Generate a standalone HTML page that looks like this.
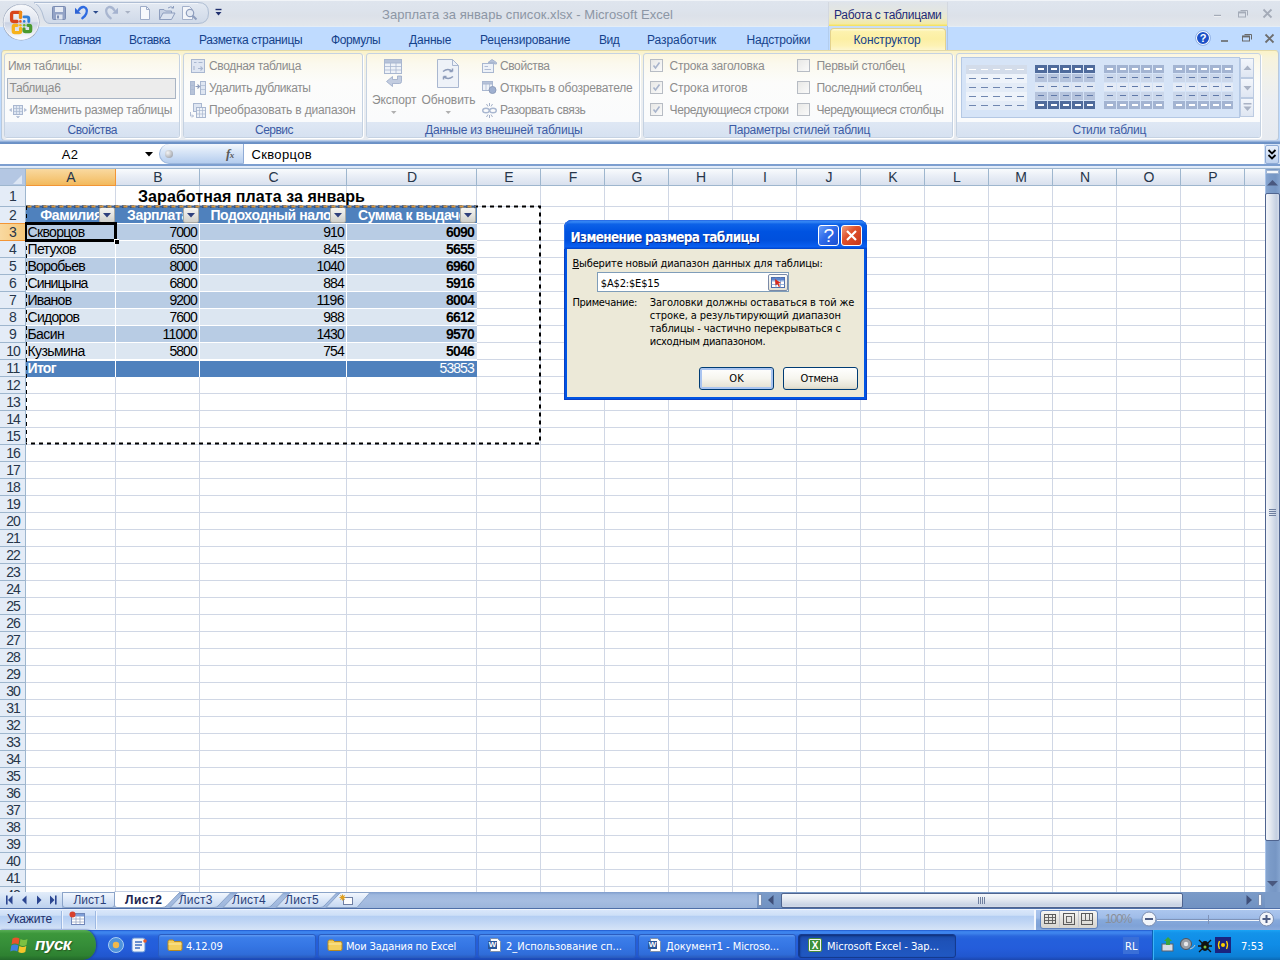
<!DOCTYPE html>
<html lang="ru"><head><meta charset="utf-8"><title>Microsoft Excel</title>
<style>
html,body{margin:0;padding:0}
body{width:1280px;height:960px;position:relative;overflow:hidden;background:#fff;font-family:"Liberation Sans",sans-serif}
.b{position:absolute;box-sizing:border-box}
.t{position:absolute;white-space:nowrap}
svg{position:absolute;overflow:visible}
u{text-decoration:underline}
</style></head><body>
<div class="b" style="left:0px;top:0px;width:1280px;height:26px;background:linear-gradient(#dfe5ee 0,#dde3ec 40%,#dce1e9 60%,#e3e7ec 100%);"></div>
<div class="b" style="left:0px;top:0px;width:1280px;height:1px;background:#f1f4f8;"></div>
<div class="b" style="left:828px;top:2px;width:120px;height:24px;background:linear-gradient(#dfe4ea 0,#e3e6e2 35%,#ebe9cd 65%,#f3eaa6 90%,#f6e052 100%);border-left:1px solid #d3d8e0;border-right:1px solid #d3d8e0;"></div>
<span class="t" style="left:834.00px;top:7.34px;font:12px/16px 'Liberation Sans',sans-serif;color:#1e2a78;letter-spacing:-0.297px;">Работа с таблицами</span>
<span class="t" style="left:382.00px;top:6.00px;font:13px/17px 'Liberation Sans',sans-serif;color:#8c96a5;letter-spacing:0.037px;">Зарплата за январь список.xlsx - Microsoft Excel</span>
<svg style="left:0;top:0" width="240" height="30"><defs><linearGradient id="qg" x1="0" y1="0" x2="0" y2="1"><stop offset="0" stop-color="#e4eaf3"/><stop offset="0.5" stop-color="#d9e1ed"/><stop offset="1" stop-color="#cfd9e8"/></linearGradient></defs><path d="M34 2.500H198Q208.500 2.500 208.500 13Q208.500 23.500 198 23.500H50Q45 23.500 43.500 17Q41 6 34 2.500Z" fill="url(#qg)" stroke="#aebdd3"/><path d="M35 3.500H198" stroke="#f2f5fa"/><rect x="52.500" y="6.500" width="13" height="13" rx="1" fill="#93a3c6" stroke="#7b8cb2"/><rect x="55" y="7" width="8" height="5" fill="#e6ebf4"/><rect x="56" y="14.500" width="6.500" height="5" fill="#dfe5f0"/><rect x="57" y="15.500" width="2" height="3" fill="#7b8cb2"/><path d="M75 7.800V13.800H81Z" fill="#2f63d4"/><path d="M78.500 10.500Q81 6.200 84.500 7.200Q88 9 86.300 13.500Q85.200 16.300 82.300 18.200" fill="none" stroke="#2f6be0" stroke-width="2.300" stroke-linecap="round"/><path d="M93 11H98.500L95.750 13.800Z" fill="#2b4a8c"/><path d="M118 7.800V13.800H112Z" fill="#a4b2cf"/><path d="M114.500 10.500Q112 6.200 108.500 7.200Q105 9 106.700 13.500Q107.800 16.300 110.700 18.200" fill="none" stroke="#a9b6d0" stroke-width="2.300" stroke-linecap="round"/><path d="M125 11H130.500L127.750 13.800Z" fill="#a9b2c4"/><path d="M140.500 6.500H146.500L149.500 9.500V19.500H140.500Z" fill="#f7f9fc" stroke="#9fadc8"/><path d="M146.500 6.500V9.500H149.500" fill="none" stroke="#9fadc8"/><path d="M159.500 19.500V9.500H164L165.500 11H171.500V13" fill="#c8d2e4" stroke="#8e9ebe"/><path d="M159.500 19.500L163 13H175L171.500 19.500Z" fill="#dde4f0" stroke="#8e9ebe"/><path d="M168 8Q171 5.500 173.500 8M173.500 8V6M173.500 8H171.500" fill="none" stroke="#8e9ebe"/><path d="M182.500 6.500H189.500L192.500 9.500V19.500H182.500Z" fill="#f4f6fa" stroke="#a3b0ca"/><circle cx="190" cy="13" r="3.700" fill="#e4eaf4" stroke="#8e9ebe" stroke-width="1.200"/><path d="M192.700 15.800L196.500 19.500" stroke="#8e9ebe" stroke-width="2"/><path d="M215.500 9.500H221.500" stroke="#1f2f6e" stroke-width="1.400"/><path d="M215.500 12H221.500L218.500 15.500Z" fill="#1f2f6e"/></svg>
<svg style="left:1210px;top:6px" width="66" height="14"><path d="M4 10.5H11" stroke="#fff" stroke-width="1"/><path d="M4 9.5H11" stroke="#a4abb8" stroke-width="1.4"/><path d="M30.5 4.5H37.5V9.5" fill="none" stroke="#a4abb8"/><rect x="28.5" y="6" width="7" height="5" fill="none" stroke="#a4abb8"/><path d="M28.5 6.6H35.5" stroke="#a4abb8" stroke-width="1.6"/><path d="M53.5 3.5L61.5 11.5M61.5 3.5L53.5 11.5" stroke="#a4abb8" stroke-width="1.8"/></svg>
<div class="b" style="left:0px;top:26px;width:1280px;height:24px;background:#bfdbff;"></div>
<div class="b" style="left:0px;top:26px;width:1280px;height:1px;background:#e4edf6;"></div>
<span class="t" style="left:59.00px;top:31.84px;font:12px/16px 'Liberation Sans',sans-serif;color:#15428b;letter-spacing:-0.555px;">Главная</span>
<span class="t" style="left:129.00px;top:31.84px;font:12px/16px 'Liberation Sans',sans-serif;color:#15428b;letter-spacing:-0.544px;">Вставка</span>
<span class="t" style="left:199.00px;top:31.84px;font:12px/16px 'Liberation Sans',sans-serif;color:#15428b;letter-spacing:-0.328px;">Разметка страницы</span>
<span class="t" style="left:331.00px;top:31.84px;font:12px/16px 'Liberation Sans',sans-serif;color:#15428b;letter-spacing:-0.417px;">Формулы</span>
<span class="t" style="left:409.00px;top:31.84px;font:12px/16px 'Liberation Sans',sans-serif;color:#15428b;letter-spacing:-0.177px;">Данные</span>
<span class="t" style="left:480.00px;top:31.84px;font:12px/16px 'Liberation Sans',sans-serif;color:#15428b;letter-spacing:-0.169px;">Рецензирование</span>
<span class="t" style="left:599.00px;top:31.84px;font:12px/16px 'Liberation Sans',sans-serif;color:#15428b;letter-spacing:-0.473px;">Вид</span>
<span class="t" style="left:647.00px;top:31.84px;font:12px/16px 'Liberation Sans',sans-serif;color:#15428b;letter-spacing:-0.062px;">Разработчик</span>
<span class="t" style="left:746.50px;top:31.84px;font:12px/16px 'Liberation Sans',sans-serif;color:#15428b;letter-spacing:-0.204px;">Надстройки</span>
<div class="b" style="left:828px;top:26px;width:120px;height:24px;background:linear-gradient(#c9ddf5,#bfdbff 40%);border-left:1px solid #b3cdee;border-right:1px solid #aec6e6;"></div>
<div class="b" style="left:830px;top:28px;width:116px;height:23px;background:linear-gradient(#fefad8 0,#fdf2ae 12%,#fcefa3 45%,#fdf2b4 75%,#fdf7d4 100%);border:1px solid #e3d28e;border-bottom:0;border-radius:4px 4px 0 0;"></div>
<span class="t" style="left:853.50px;top:31.84px;font:12px/16px 'Liberation Sans',sans-serif;color:#15428b;letter-spacing:-0.129px;">Конструктор</span>
<svg style="left:1195px;top:30px" width="84" height="16"><circle cx="8" cy="8" r="6.6" fill="#1b50c8" stroke="#fff" stroke-width="1.2"/><circle cx="8" cy="8" r="7.4" fill="none" stroke="#7fa3de" stroke-width="0.8"/><path d="M26 11H33" stroke="#666" stroke-width="1.6"/><path d="M49.5 4.5H56.5V9.5" fill="none" stroke="#6a6a6a"/><rect x="47.5" y="6" width="7" height="5" fill="none" stroke="#6a6a6a"/><path d="M47.5 6.6H54.5" stroke="#6a6a6a" stroke-width="1.6"/><path d="M70.5 4.5L78.5 12.5M78.5 4.5L70.5 12.5" stroke="#6e6e6e" stroke-width="1.8"/></svg>
<span class="t" style="left:1199.63px;top:31.19px;font:bold 11px/14px 'Liberation Sans',sans-serif;color:#fff;">?</span>
<svg style="left:0;top:0" width="44" height="44"><defs><radialGradient id="og" cx="0.5" cy="0.25" r="0.9"><stop offset="0" stop-color="#ffffff"/><stop offset="0.45" stop-color="#e9edf4"/><stop offset="0.5" stop-color="#cfd7e6"/><stop offset="0.8" stop-color="#e3e8f1"/><stop offset="1" stop-color="#ffffff"/></radialGradient><linearGradient id="og2" x1="0" y1="0" x2="0" y2="1"><stop offset="0" stop-color="#f8f9fc"/><stop offset="0.48" stop-color="#dfe4ee"/><stop offset="0.52" stop-color="#c9d2e3"/><stop offset="1" stop-color="#fdfdff"/></linearGradient></defs><circle cx="21.200" cy="22.200" r="18.300" fill="#9aa6bc"/><circle cx="21.200" cy="22.200" r="17.300" fill="url(#og2)" stroke="#fff" stroke-width="0.800"/><path d="M20.500 12.300H13.500Q11.600 12.300 11.600 14.200V19.600Q11.600 21.500 13.500 21.500H17" fill="none" stroke="#d8441c" stroke-width="3.300" stroke-linecap="round"/><path d="M20.500 12.300V17.500" stroke="#ee8a14" stroke-width="3.300" stroke-linecap="round"/><path d="M24 16.900H27Q28.800 16.900 28.800 18.700V21.500" fill="none" stroke="#2f7ed8" stroke-width="2.900" stroke-linecap="round"/><path d="M17 25.300H14.800Q13.300 25.300 13.300 26.800V31Q13.300 32.600 14.800 32.600H19Q20.600 32.600 20.600 31V28.500" fill="none" stroke="#f7b21a" stroke-width="3.300" stroke-linecap="round"/><path d="M28 25.300H29.200Q30.700 25.300 30.700 26.800V30Q30.700 31.600 29.200 31.600H25.500Q24 31.600 24 30V28.800" fill="none" stroke="#4a9a2e" stroke-width="3.200" stroke-linecap="round"/><circle cx="20.400" cy="21.400" r="1.300" fill="#e8541c"/><circle cx="24.200" cy="21.400" r="1.300" fill="#2f7ed8"/><circle cx="20.400" cy="25.300" r="1.300" fill="#f7b21a"/><circle cx="24.200" cy="25.300" r="1.300" fill="#6ab82e"/></svg>
<div class="b" style="left:0px;top:50px;width:1280px;height:93px;background:#bfdbff;"></div>
<div class="b" style="left:1px;top:50px;width:1278px;height:91px;background:linear-gradient(#fbf3c8 0,#f7f3dc 8%,#f1f1ea 30%,#ebeef2 55%,#e6eaf0 100%);border:1px solid #b9c9dc;border-top-color:#e3d9a8;border-radius:4px;"></div>
<div class="b" style="left:0px;top:140px;width:1280px;height:4px;background:linear-gradient(#c9d9ef 0,#a5bee2 30%,#6f94c8 55%,#6a8fc4 100%);"></div>
<div class="b" style="left:4px;top:53px;width:176px;height:85px;background:linear-gradient(#fbf6e0 0,#fbf9ee 12%,#fcfcfb 35%,#fafbfc 80%);border:1px solid #c5d2e2;border-radius:3px;box-shadow:1px 1px 0 #fff;"></div>
<div class="b" style="left:5px;top:122px;width:174px;height:15px;background:linear-gradient(#dfe8f4,#d6e1f1);border-radius:0 0 2px 2px;"></div>
<span class="t" style="left:67.50px;top:121.84px;font:12px/16px 'Liberation Sans',sans-serif;color:#3b5ba5;letter-spacing:-0.400px;">Свойства</span>
<div class="b" style="left:183px;top:53px;width:180px;height:85px;background:linear-gradient(#fbf6e0 0,#fbf9ee 12%,#fcfcfb 35%,#fafbfc 80%);border:1px solid #c5d2e2;border-radius:3px;box-shadow:1px 1px 0 #fff;"></div>
<div class="b" style="left:184px;top:122px;width:178px;height:15px;background:linear-gradient(#dfe8f4,#d6e1f1);border-radius:0 0 2px 2px;"></div>
<span class="t" style="left:255.00px;top:121.84px;font:12px/16px 'Liberation Sans',sans-serif;color:#3b5ba5;letter-spacing:-0.516px;">Сервис</span>
<div class="b" style="left:366px;top:53px;width:274px;height:85px;background:linear-gradient(#fbf6e0 0,#fbf9ee 12%,#fcfcfb 35%,#fafbfc 80%);border:1px solid #c5d2e2;border-radius:3px;box-shadow:1px 1px 0 #fff;"></div>
<div class="b" style="left:367px;top:122px;width:272px;height:15px;background:linear-gradient(#dfe8f4,#d6e1f1);border-radius:0 0 2px 2px;"></div>
<span class="t" style="left:425.00px;top:121.84px;font:12px/16px 'Liberation Sans',sans-serif;color:#3b5ba5;letter-spacing:-0.198px;">Данные из внешней таблицы</span>
<div class="b" style="left:643px;top:53px;width:310px;height:85px;background:linear-gradient(#fbf6e0 0,#fbf9ee 12%,#fcfcfb 35%,#fafbfc 80%);border:1px solid #c5d2e2;border-radius:3px;box-shadow:1px 1px 0 #fff;"></div>
<div class="b" style="left:644px;top:122px;width:308px;height:15px;background:linear-gradient(#dfe8f4,#d6e1f1);border-radius:0 0 2px 2px;"></div>
<span class="t" style="left:728.50px;top:121.84px;font:12px/16px 'Liberation Sans',sans-serif;color:#3b5ba5;letter-spacing:-0.290px;">Параметры стилей таблиц</span>
<div class="b" style="left:956px;top:53px;width:305px;height:85px;background:linear-gradient(#fbf6e0 0,#fbf9ee 12%,#fcfcfb 35%,#fafbfc 80%);border:1px solid #c5d2e2;border-radius:3px;box-shadow:1px 1px 0 #fff;"></div>
<div class="b" style="left:957px;top:122px;width:303px;height:15px;background:linear-gradient(#dfe8f4,#d6e1f1);border-radius:0 0 2px 2px;"></div>
<span class="t" style="left:1072.50px;top:121.84px;font:12px/16px 'Liberation Sans',sans-serif;color:#3b5ba5;letter-spacing:-0.280px;">Стили таблиц</span>
<span class="t" style="left:8.00px;top:57.84px;font:12px/16px 'Liberation Sans',sans-serif;color:#8d8d8d;letter-spacing:-0.302px;">Имя таблицы:</span>
<div class="b" style="left:7px;top:78px;width:169px;height:21px;background:#ececec;border:1px solid #a8b4c4;"></div>
<span class="t" style="left:9.50px;top:79.84px;font:12px/16px 'Liberation Sans',sans-serif;color:#8d8d8d;letter-spacing:-0.342px;">Таблица6</span>
<span class="t" style="left:29.50px;top:101.84px;font:12px/16px 'Liberation Sans',sans-serif;color:#8d8d8d;letter-spacing:-0.269px;">Изменить размер таблицы</span>
<span class="t" style="left:209.00px;top:57.84px;font:12px/16px 'Liberation Sans',sans-serif;color:#8d8d8d;letter-spacing:-0.339px;">Сводная таблица</span>
<span class="t" style="left:209.00px;top:79.84px;font:12px/16px 'Liberation Sans',sans-serif;color:#8d8d8d;letter-spacing:-0.404px;">Удалить дубликаты</span>
<span class="t" style="left:209.00px;top:101.84px;font:12px/16px 'Liberation Sans',sans-serif;color:#8d8d8d;letter-spacing:-0.159px;">Преобразовать в диапазон</span>
<span class="t" style="left:372.00px;top:91.84px;font:12px/16px 'Liberation Sans',sans-serif;color:#8d8d8d;letter-spacing:-0.085px;">Экспорт</span>
<span class="t" style="left:421.50px;top:91.84px;font:12px/16px 'Liberation Sans',sans-serif;color:#8d8d8d;letter-spacing:-0.043px;">Обновить</span>
<span class="t" style="left:500.00px;top:57.84px;font:12px/16px 'Liberation Sans',sans-serif;color:#8d8d8d;letter-spacing:-0.400px;">Свойства</span>
<span class="t" style="left:500.00px;top:79.84px;font:12px/16px 'Liberation Sans',sans-serif;color:#8d8d8d;letter-spacing:-0.208px;">Открыть в обозревателе</span>
<span class="t" style="left:500.00px;top:101.84px;font:12px/16px 'Liberation Sans',sans-serif;color:#8d8d8d;letter-spacing:-0.373px;">Разорвать связь</span>
<span class="t" style="left:669.50px;top:57.84px;font:12px/16px 'Liberation Sans',sans-serif;color:#8d8d8d;letter-spacing:-0.194px;">Строка заголовка</span>
<span class="t" style="left:669.50px;top:79.84px;font:12px/16px 'Liberation Sans',sans-serif;color:#8d8d8d;letter-spacing:-0.072px;">Строка итогов</span>
<span class="t" style="left:669.50px;top:101.84px;font:12px/16px 'Liberation Sans',sans-serif;color:#8d8d8d;letter-spacing:-0.350px;">Чередующиеся строки</span>
<span class="t" style="left:816.50px;top:57.84px;font:12px/16px 'Liberation Sans',sans-serif;color:#8d8d8d;letter-spacing:-0.291px;">Первый столбец</span>
<span class="t" style="left:816.50px;top:79.84px;font:12px/16px 'Liberation Sans',sans-serif;color:#8d8d8d;letter-spacing:-0.302px;">Последний столбец</span>
<span class="t" style="left:816.50px;top:101.84px;font:12px/16px 'Liberation Sans',sans-serif;color:#8d8d8d;letter-spacing:-0.449px;">Чередующиеся столбцы</span>
<div class="b" style="left:650px;top:59px;width:13px;height:13px;background:linear-gradient(135deg,#e8e8e6,#fafafa);border:1px solid #b7bcc4;"></div>
<svg style="left:652px;top:61px" width="9" height="9"><path d="M1.5 4.5L3.5 7L7.5 1.5" fill="none" stroke="#a8b4cc" stroke-width="1.6"/></svg>
<div class="b" style="left:797px;top:59px;width:13px;height:13px;background:linear-gradient(135deg,#e8e8e6,#fafafa);border:1px solid #b7bcc4;"></div>
<div class="b" style="left:650px;top:81px;width:13px;height:13px;background:linear-gradient(135deg,#e8e8e6,#fafafa);border:1px solid #b7bcc4;"></div>
<svg style="left:652px;top:83px" width="9" height="9"><path d="M1.5 4.5L3.5 7L7.5 1.5" fill="none" stroke="#a8b4cc" stroke-width="1.6"/></svg>
<div class="b" style="left:797px;top:81px;width:13px;height:13px;background:linear-gradient(135deg,#e8e8e6,#fafafa);border:1px solid #b7bcc4;"></div>
<div class="b" style="left:650px;top:103px;width:13px;height:13px;background:linear-gradient(135deg,#e8e8e6,#fafafa);border:1px solid #b7bcc4;"></div>
<svg style="left:652px;top:105px" width="9" height="9"><path d="M1.5 4.5L3.5 7L7.5 1.5" fill="none" stroke="#a8b4cc" stroke-width="1.6"/></svg>
<div class="b" style="left:797px;top:103px;width:13px;height:13px;background:linear-gradient(135deg,#e8e8e6,#fafafa);border:1px solid #b7bcc4;"></div>
<svg style="left:0;top:50px" width="1280" height="92" fill="none" stroke="#a9b7d0"><rect x="13.500" y="55.500" width="9" height="9" fill="#dfe6f2"/><path d="M13.500 58.500H22.500M13.500 61.500H22.500M16.500 55.500V64.500M19.500 55.500V64.500" stroke-width="0.700"/><path d="M11.500 58.500L9.500 60L11.500 61.500ZM24.500 58.500L26.500 60L24.500 61.500ZM16.500 66.500H19.500L18 68Z" fill="#a9b7d0" stroke-width="0.600"/><rect x="191.500" y="9.500" width="13" height="13" fill="#dfe6f2"/><path d="M194 12.500H196.500M198.500 12.500H202.500M194 16V20M198 18.500H202M200.500 16.500L202.500 18.500L200.500 20.500" stroke-width="1.100"/><rect x="190.500" y="31.500" width="4" height="13" fill="#b7c3d9"/><rect x="200.500" y="31.500" width="5" height="13" fill="#dfe6f2"/><path d="M200.500 35.500H205.500M200.500 39.500H205.500M190.500 35.500H194.500M190.500 39.500H194.500" stroke-width="0.700"/><path d="M195.500 36.500H199M197.500 34.500L199.500 36.500L197.500 38.500" stroke="#8d9cba" stroke-width="1.100"/><rect x="193.500" y="53.500" width="8" height="8" fill="#dfe6f2"/><rect x="196.500" y="57.500" width="9" height="10" fill="#eef2f8"/><path d="M196.500 60.500H205.500M196.500 64H205.500M199.500 57.500V67.500M202.500 57.500V67.500" stroke-width="0.700"/><path d="M190.500 62V66H193.500M192 64.500L193.500 66L192 67.500" stroke-width="0.900"/><rect x="384.500" y="9.500" width="17" height="14" fill="#eef2f8"/><rect x="384.500" y="9.500" width="17" height="3.500" fill="#b7c3d9"/><path d="M384.500 16.500H401.500M384.500 20H401.500M390.500 13V23.500M396 13V23.500" stroke-width="0.800"/><path d="M401.500 26V31.500Q401.500 33.500 399.500 33.500H392.500V36.500L386.500 31.500L392.500 26.500V29.500H397.500V26Z" fill="#c3cde0" stroke="#9aa9c6" stroke-width="0.800"/><path d="M437.500 9.500H452.500L458.500 15.500V37.500H437.500Z" fill="#eef2f8"/><path d="M452.500 9.500V15.500H458.500" /><path d="M443 21.500Q448 17.500 452.500 21.500M452.500 21.500V18.500M452.500 21.500H449.500M453 26.500Q448 30.500 443.500 26.500M443.500 26.500V29.500M443.500 26.500H446.500" stroke="#8d9cba" stroke-width="1.500"/><path d="M391 61H396.500L393.750 64Z" fill="#b0b0b0" stroke="none"/><path d="M445.500 61H451L448.250 64Z" fill="#b0b0b0" stroke="none"/><rect x="482.500" y="13.500" width="11" height="9" fill="#eef2f8"/><path d="M484.500 16.500H488M484.500 19.500H491" stroke-width="0.900"/><path d="M488 12.500L492 9.500L496.500 12.500V14H494.500V12.500Z" fill="#b7c3d9"/><rect x="482.500" y="31.500" width="10" height="9" fill="#eef2f8"/><rect x="482.500" y="31.500" width="10" height="2.500" fill="#b7c3d9"/><path d="M486 34V40.500M489.500 34V40.500" stroke-width="0.700"/><circle cx="492.500" cy="40" r="3.500" fill="#9fb0d0" stroke="#8d9cba"/><ellipse cx="486" cy="60.500" rx="3.300" ry="2.300" stroke-width="1.400"/><ellipse cx="493" cy="60.500" rx="3.300" ry="2.300" stroke-width="1.400"/><path d="M489.500 53V56M486.500 54L488 56.500M492.500 54L491 56.500M489.500 65V68M486.500 67L488 64.500M492.500 67L491 64.500" stroke="#8d9cba" stroke-width="0.800"/></svg>
<div class="b" style="left:961px;top:57px;width:279px;height:61px;background:#d6e4f7;border:1px solid #b4c8e4;"></div>
<div class="b" style="left:966px;top:65px;width:61px;height:9px;background:#d3dcea;"></div>
<div class="b" style="left:969px;top:69px;width:7px;height:1px;background:#fff;"></div>
<div class="b" style="left:981px;top:69px;width:7px;height:1px;background:#fff;"></div>
<div class="b" style="left:993px;top:69px;width:7px;height:1px;background:#fff;"></div>
<div class="b" style="left:1005px;top:69px;width:7px;height:1px;background:#fff;"></div>
<div class="b" style="left:1017px;top:69px;width:7px;height:1px;background:#fff;"></div>
<div class="b" style="left:966px;top:74px;width:61px;height:9px;background:#eef3fa;"></div>
<div class="b" style="left:969px;top:78px;width:7px;height:1px;background:#6f86b0;"></div>
<div class="b" style="left:981px;top:78px;width:7px;height:1px;background:#6f86b0;"></div>
<div class="b" style="left:993px;top:78px;width:7px;height:1px;background:#6f86b0;"></div>
<div class="b" style="left:1005px;top:78px;width:7px;height:1px;background:#6f86b0;"></div>
<div class="b" style="left:1017px;top:78px;width:7px;height:1px;background:#6f86b0;"></div>
<div class="b" style="left:966px;top:83px;width:61px;height:9px;background:#e4ecf7;"></div>
<div class="b" style="left:969px;top:87px;width:7px;height:1px;background:#6f86b0;"></div>
<div class="b" style="left:981px;top:87px;width:7px;height:1px;background:#6f86b0;"></div>
<div class="b" style="left:993px;top:87px;width:7px;height:1px;background:#6f86b0;"></div>
<div class="b" style="left:1005px;top:87px;width:7px;height:1px;background:#6f86b0;"></div>
<div class="b" style="left:1017px;top:87px;width:7px;height:1px;background:#6f86b0;"></div>
<div class="b" style="left:966px;top:92px;width:61px;height:9px;background:#eef3fa;"></div>
<div class="b" style="left:969px;top:96px;width:7px;height:1px;background:#6f86b0;"></div>
<div class="b" style="left:981px;top:96px;width:7px;height:1px;background:#6f86b0;"></div>
<div class="b" style="left:993px;top:96px;width:7px;height:1px;background:#6f86b0;"></div>
<div class="b" style="left:1005px;top:96px;width:7px;height:1px;background:#6f86b0;"></div>
<div class="b" style="left:1017px;top:96px;width:7px;height:1px;background:#6f86b0;"></div>
<div class="b" style="left:966px;top:101px;width:61px;height:9px;background:#e4ecf7;"></div>
<div class="b" style="left:969px;top:105px;width:7px;height:1px;background:#6f86b0;"></div>
<div class="b" style="left:981px;top:105px;width:7px;height:1px;background:#6f86b0;"></div>
<div class="b" style="left:993px;top:105px;width:7px;height:1px;background:#6f86b0;"></div>
<div class="b" style="left:1005px;top:105px;width:7px;height:1px;background:#6f86b0;"></div>
<div class="b" style="left:1017px;top:105px;width:7px;height:1px;background:#6f86b0;"></div>
<div class="b" style="left:1035px;top:65px;width:12px;height:8px;background:#4f6b9c;"></div>
<div class="b" style="left:1038px;top:68px;width:6px;height:2px;background:#fff;"></div>
<div class="b" style="left:1048px;top:65px;width:11px;height:8px;background:#4f6b9c;"></div>
<div class="b" style="left:1051px;top:68px;width:6px;height:2px;background:#fff;"></div>
<div class="b" style="left:1060px;top:65px;width:11px;height:8px;background:#4f6b9c;"></div>
<div class="b" style="left:1063px;top:68px;width:6px;height:2px;background:#fff;"></div>
<div class="b" style="left:1072px;top:65px;width:11px;height:8px;background:#4f6b9c;"></div>
<div class="b" style="left:1075px;top:68px;width:6px;height:2px;background:#fff;"></div>
<div class="b" style="left:1084px;top:65px;width:11px;height:8px;background:#4f6b9c;"></div>
<div class="b" style="left:1087px;top:68px;width:6px;height:2px;background:#fff;"></div>
<div class="b" style="left:1035px;top:74px;width:12px;height:8px;background:#b5c3dc;"></div>
<div class="b" style="left:1038px;top:77px;width:6px;height:1px;background:#5f78a8;"></div>
<div class="b" style="left:1048px;top:74px;width:11px;height:8px;background:#b5c3dc;"></div>
<div class="b" style="left:1051px;top:77px;width:6px;height:1px;background:#5f78a8;"></div>
<div class="b" style="left:1060px;top:74px;width:11px;height:8px;background:#b5c3dc;"></div>
<div class="b" style="left:1063px;top:77px;width:6px;height:1px;background:#5f78a8;"></div>
<div class="b" style="left:1072px;top:74px;width:11px;height:8px;background:#b5c3dc;"></div>
<div class="b" style="left:1075px;top:77px;width:6px;height:1px;background:#5f78a8;"></div>
<div class="b" style="left:1084px;top:74px;width:11px;height:8px;background:#b5c3dc;"></div>
<div class="b" style="left:1087px;top:77px;width:6px;height:1px;background:#5f78a8;"></div>
<div class="b" style="left:1035px;top:83px;width:12px;height:8px;background:#dfe7f3;"></div>
<div class="b" style="left:1038px;top:86px;width:6px;height:1px;background:#5f78a8;"></div>
<div class="b" style="left:1048px;top:83px;width:11px;height:8px;background:#dfe7f3;"></div>
<div class="b" style="left:1051px;top:86px;width:6px;height:1px;background:#5f78a8;"></div>
<div class="b" style="left:1060px;top:83px;width:11px;height:8px;background:#dfe7f3;"></div>
<div class="b" style="left:1063px;top:86px;width:6px;height:1px;background:#5f78a8;"></div>
<div class="b" style="left:1072px;top:83px;width:11px;height:8px;background:#dfe7f3;"></div>
<div class="b" style="left:1075px;top:86px;width:6px;height:1px;background:#5f78a8;"></div>
<div class="b" style="left:1084px;top:83px;width:11px;height:8px;background:#dfe7f3;"></div>
<div class="b" style="left:1087px;top:86px;width:6px;height:1px;background:#5f78a8;"></div>
<div class="b" style="left:1035px;top:92px;width:12px;height:8px;background:#b5c3dc;"></div>
<div class="b" style="left:1038px;top:95px;width:6px;height:1px;background:#5f78a8;"></div>
<div class="b" style="left:1048px;top:92px;width:11px;height:8px;background:#b5c3dc;"></div>
<div class="b" style="left:1051px;top:95px;width:6px;height:1px;background:#5f78a8;"></div>
<div class="b" style="left:1060px;top:92px;width:11px;height:8px;background:#b5c3dc;"></div>
<div class="b" style="left:1063px;top:95px;width:6px;height:1px;background:#5f78a8;"></div>
<div class="b" style="left:1072px;top:92px;width:11px;height:8px;background:#b5c3dc;"></div>
<div class="b" style="left:1075px;top:95px;width:6px;height:1px;background:#5f78a8;"></div>
<div class="b" style="left:1084px;top:92px;width:11px;height:8px;background:#b5c3dc;"></div>
<div class="b" style="left:1087px;top:95px;width:6px;height:1px;background:#5f78a8;"></div>
<div class="b" style="left:1035px;top:101px;width:12px;height:8px;background:#4f6b9c;"></div>
<div class="b" style="left:1038px;top:104px;width:6px;height:2px;background:#fff;"></div>
<div class="b" style="left:1048px;top:101px;width:11px;height:8px;background:#4f6b9c;"></div>
<div class="b" style="left:1051px;top:104px;width:6px;height:2px;background:#fff;"></div>
<div class="b" style="left:1060px;top:101px;width:11px;height:8px;background:#4f6b9c;"></div>
<div class="b" style="left:1063px;top:104px;width:6px;height:2px;background:#fff;"></div>
<div class="b" style="left:1072px;top:101px;width:11px;height:8px;background:#4f6b9c;"></div>
<div class="b" style="left:1075px;top:104px;width:6px;height:2px;background:#fff;"></div>
<div class="b" style="left:1084px;top:101px;width:11px;height:8px;background:#4f6b9c;"></div>
<div class="b" style="left:1087px;top:104px;width:6px;height:2px;background:#fff;"></div>
<div class="b" style="left:1104px;top:65px;width:12px;height:8px;background:#a3b4d2;"></div>
<div class="b" style="left:1107px;top:68px;width:6px;height:2px;background:#fff;"></div>
<div class="b" style="left:1117px;top:65px;width:11px;height:8px;background:#a3b4d2;"></div>
<div class="b" style="left:1120px;top:68px;width:6px;height:2px;background:#fff;"></div>
<div class="b" style="left:1129px;top:65px;width:11px;height:8px;background:#a3b4d2;"></div>
<div class="b" style="left:1132px;top:68px;width:6px;height:2px;background:#fff;"></div>
<div class="b" style="left:1141px;top:65px;width:11px;height:8px;background:#a3b4d2;"></div>
<div class="b" style="left:1144px;top:68px;width:6px;height:2px;background:#fff;"></div>
<div class="b" style="left:1153px;top:65px;width:11px;height:8px;background:#a3b4d2;"></div>
<div class="b" style="left:1156px;top:68px;width:6px;height:2px;background:#fff;"></div>
<div class="b" style="left:1104px;top:74px;width:12px;height:8px;background:#cbd7ea;"></div>
<div class="b" style="left:1107px;top:77px;width:6px;height:1px;background:#5f78a8;"></div>
<div class="b" style="left:1117px;top:74px;width:11px;height:8px;background:#cbd7ea;"></div>
<div class="b" style="left:1120px;top:77px;width:6px;height:1px;background:#5f78a8;"></div>
<div class="b" style="left:1129px;top:74px;width:11px;height:8px;background:#cbd7ea;"></div>
<div class="b" style="left:1132px;top:77px;width:6px;height:1px;background:#5f78a8;"></div>
<div class="b" style="left:1141px;top:74px;width:11px;height:8px;background:#cbd7ea;"></div>
<div class="b" style="left:1144px;top:77px;width:6px;height:1px;background:#5f78a8;"></div>
<div class="b" style="left:1153px;top:74px;width:11px;height:8px;background:#cbd7ea;"></div>
<div class="b" style="left:1156px;top:77px;width:6px;height:1px;background:#5f78a8;"></div>
<div class="b" style="left:1104px;top:83px;width:12px;height:8px;background:#e4ebf6;"></div>
<div class="b" style="left:1107px;top:86px;width:6px;height:1px;background:#5f78a8;"></div>
<div class="b" style="left:1117px;top:83px;width:11px;height:8px;background:#e4ebf6;"></div>
<div class="b" style="left:1120px;top:86px;width:6px;height:1px;background:#5f78a8;"></div>
<div class="b" style="left:1129px;top:83px;width:11px;height:8px;background:#e4ebf6;"></div>
<div class="b" style="left:1132px;top:86px;width:6px;height:1px;background:#5f78a8;"></div>
<div class="b" style="left:1141px;top:83px;width:11px;height:8px;background:#e4ebf6;"></div>
<div class="b" style="left:1144px;top:86px;width:6px;height:1px;background:#5f78a8;"></div>
<div class="b" style="left:1153px;top:83px;width:11px;height:8px;background:#e4ebf6;"></div>
<div class="b" style="left:1156px;top:86px;width:6px;height:1px;background:#5f78a8;"></div>
<div class="b" style="left:1104px;top:92px;width:12px;height:8px;background:#cbd7ea;"></div>
<div class="b" style="left:1107px;top:95px;width:6px;height:1px;background:#5f78a8;"></div>
<div class="b" style="left:1117px;top:92px;width:11px;height:8px;background:#cbd7ea;"></div>
<div class="b" style="left:1120px;top:95px;width:6px;height:1px;background:#5f78a8;"></div>
<div class="b" style="left:1129px;top:92px;width:11px;height:8px;background:#cbd7ea;"></div>
<div class="b" style="left:1132px;top:95px;width:6px;height:1px;background:#5f78a8;"></div>
<div class="b" style="left:1141px;top:92px;width:11px;height:8px;background:#cbd7ea;"></div>
<div class="b" style="left:1144px;top:95px;width:6px;height:1px;background:#5f78a8;"></div>
<div class="b" style="left:1153px;top:92px;width:11px;height:8px;background:#cbd7ea;"></div>
<div class="b" style="left:1156px;top:95px;width:6px;height:1px;background:#5f78a8;"></div>
<div class="b" style="left:1104px;top:101px;width:12px;height:8px;background:#a3b4d2;"></div>
<div class="b" style="left:1107px;top:104px;width:6px;height:2px;background:#fff;"></div>
<div class="b" style="left:1117px;top:101px;width:11px;height:8px;background:#a3b4d2;"></div>
<div class="b" style="left:1120px;top:104px;width:6px;height:2px;background:#fff;"></div>
<div class="b" style="left:1129px;top:101px;width:11px;height:8px;background:#a3b4d2;"></div>
<div class="b" style="left:1132px;top:104px;width:6px;height:2px;background:#fff;"></div>
<div class="b" style="left:1141px;top:101px;width:11px;height:8px;background:#a3b4d2;"></div>
<div class="b" style="left:1144px;top:104px;width:6px;height:2px;background:#fff;"></div>
<div class="b" style="left:1153px;top:101px;width:11px;height:8px;background:#a3b4d2;"></div>
<div class="b" style="left:1156px;top:104px;width:6px;height:2px;background:#fff;"></div>
<div class="b" style="left:1173px;top:65px;width:12px;height:8px;background:#a3b4d2;"></div>
<div class="b" style="left:1176px;top:68px;width:6px;height:2px;background:#fff;"></div>
<div class="b" style="left:1186px;top:65px;width:11px;height:8px;background:#a3b4d2;"></div>
<div class="b" style="left:1189px;top:68px;width:6px;height:2px;background:#fff;"></div>
<div class="b" style="left:1198px;top:65px;width:11px;height:8px;background:#a3b4d2;"></div>
<div class="b" style="left:1201px;top:68px;width:6px;height:2px;background:#fff;"></div>
<div class="b" style="left:1210px;top:65px;width:11px;height:8px;background:#a3b4d2;"></div>
<div class="b" style="left:1213px;top:68px;width:6px;height:2px;background:#fff;"></div>
<div class="b" style="left:1222px;top:65px;width:11px;height:8px;background:#a3b4d2;"></div>
<div class="b" style="left:1225px;top:68px;width:6px;height:2px;background:#fff;"></div>
<div class="b" style="left:1173px;top:74px;width:12px;height:8px;background:#cbd7ea;"></div>
<div class="b" style="left:1176px;top:77px;width:6px;height:1px;background:#5f78a8;"></div>
<div class="b" style="left:1186px;top:74px;width:11px;height:8px;background:#cbd7ea;"></div>
<div class="b" style="left:1189px;top:77px;width:6px;height:1px;background:#5f78a8;"></div>
<div class="b" style="left:1198px;top:74px;width:11px;height:8px;background:#cbd7ea;"></div>
<div class="b" style="left:1201px;top:77px;width:6px;height:1px;background:#5f78a8;"></div>
<div class="b" style="left:1210px;top:74px;width:11px;height:8px;background:#cbd7ea;"></div>
<div class="b" style="left:1213px;top:77px;width:6px;height:1px;background:#5f78a8;"></div>
<div class="b" style="left:1222px;top:74px;width:11px;height:8px;background:#cbd7ea;"></div>
<div class="b" style="left:1225px;top:77px;width:6px;height:1px;background:#5f78a8;"></div>
<div class="b" style="left:1173px;top:83px;width:12px;height:8px;background:#e4ebf6;"></div>
<div class="b" style="left:1176px;top:86px;width:6px;height:1px;background:#5f78a8;"></div>
<div class="b" style="left:1186px;top:83px;width:11px;height:8px;background:#e4ebf6;"></div>
<div class="b" style="left:1189px;top:86px;width:6px;height:1px;background:#5f78a8;"></div>
<div class="b" style="left:1198px;top:83px;width:11px;height:8px;background:#e4ebf6;"></div>
<div class="b" style="left:1201px;top:86px;width:6px;height:1px;background:#5f78a8;"></div>
<div class="b" style="left:1210px;top:83px;width:11px;height:8px;background:#e4ebf6;"></div>
<div class="b" style="left:1213px;top:86px;width:6px;height:1px;background:#5f78a8;"></div>
<div class="b" style="left:1222px;top:83px;width:11px;height:8px;background:#e4ebf6;"></div>
<div class="b" style="left:1225px;top:86px;width:6px;height:1px;background:#5f78a8;"></div>
<div class="b" style="left:1173px;top:92px;width:12px;height:8px;background:#cbd7ea;"></div>
<div class="b" style="left:1176px;top:95px;width:6px;height:1px;background:#5f78a8;"></div>
<div class="b" style="left:1186px;top:92px;width:11px;height:8px;background:#cbd7ea;"></div>
<div class="b" style="left:1189px;top:95px;width:6px;height:1px;background:#5f78a8;"></div>
<div class="b" style="left:1198px;top:92px;width:11px;height:8px;background:#cbd7ea;"></div>
<div class="b" style="left:1201px;top:95px;width:6px;height:1px;background:#5f78a8;"></div>
<div class="b" style="left:1210px;top:92px;width:11px;height:8px;background:#cbd7ea;"></div>
<div class="b" style="left:1213px;top:95px;width:6px;height:1px;background:#5f78a8;"></div>
<div class="b" style="left:1222px;top:92px;width:11px;height:8px;background:#cbd7ea;"></div>
<div class="b" style="left:1225px;top:95px;width:6px;height:1px;background:#5f78a8;"></div>
<div class="b" style="left:1173px;top:101px;width:12px;height:8px;background:#a3b4d2;"></div>
<div class="b" style="left:1176px;top:104px;width:6px;height:2px;background:#fff;"></div>
<div class="b" style="left:1186px;top:101px;width:11px;height:8px;background:#a3b4d2;"></div>
<div class="b" style="left:1189px;top:104px;width:6px;height:2px;background:#fff;"></div>
<div class="b" style="left:1198px;top:101px;width:11px;height:8px;background:#a3b4d2;"></div>
<div class="b" style="left:1201px;top:104px;width:6px;height:2px;background:#fff;"></div>
<div class="b" style="left:1210px;top:101px;width:11px;height:8px;background:#a3b4d2;"></div>
<div class="b" style="left:1213px;top:104px;width:6px;height:2px;background:#fff;"></div>
<div class="b" style="left:1222px;top:101px;width:11px;height:8px;background:#a3b4d2;"></div>
<div class="b" style="left:1225px;top:104px;width:6px;height:2px;background:#fff;"></div>
<div class="b" style="left:1240px;top:58px;width:14px;height:20px;background:linear-gradient(#f3f6fb,#dfe6f2);border:1px solid #bccbe2;"></div>
<div class="b" style="left:1240px;top:78px;width:14px;height:20px;background:linear-gradient(#f3f6fb,#dfe6f2);border:1px solid #bccbe2;"></div>
<div class="b" style="left:1240px;top:98px;width:14px;height:19px;background:linear-gradient(#f3f6fb,#dfe6f2);border:1px solid #bccbe2;"></div>
<svg style="left:1243px;top:58px" width="9" height="60" fill="#a9b2c4"><path d="M0.500 12L4.500 7.500L8.500 12ZM0.500 28H8.500L4.500 32.500ZM0.500 48.500H8.500L4.500 53Z"/><rect x="0.500" y="45" width="8" height="1.500"/></svg>
<div class="b" style="left:0px;top:144px;width:1280px;height:25px;background:#d5e3f6;"></div>
<div class="b" style="left:0px;top:144px;width:158px;height:20px;background:#fff;"></div>
<span class="t" style="left:61.75px;top:146.00px;font:13px/17px 'Liberation Sans',sans-serif;color:#000;letter-spacing:0.297px;">A2</span>
<svg style="left:145px;top:152px" width="8" height="5"><path d="M0 0H8L4 4.5Z" fill="#000"/></svg>
<div class="b" style="left:158px;top:144px;width:86px;height:20px;background:#fff;"></div>
<div class="b" style="left:159px;top:144px;width:85px;height:20px;background:linear-gradient(#f4f8fd 0,#d9e6f7 40%,#b5cdee 100%);border:1px solid #9db7dc;border-right:1px solid #8fabd6;border-radius:10px 0 0 10px;border-top:0;"></div>
<svg style="left:164px;top:149px" width="10" height="10"><defs><radialGradient id="gb" cx="0.35" cy="0.35" r="0.8"><stop offset="0" stop-color="#f4f4f4"/><stop offset="1" stop-color="#9a9ea6"/></radialGradient></defs><circle cx="5" cy="5" r="4" fill="url(#gb)"/></svg>
<span class="t" style="left:226px;top:145px;font:italic bold 13px/18px 'Liberation Serif',serif;color:#5a5a5a;letter-spacing:-0.5px">f<span style="font-size:9px">x</span></span>
<div class="b" style="left:244px;top:144px;width:1020px;height:20px;background:#fff;"></div>
<span class="t" style="left:251.50px;top:146.00px;font:13px/17px 'Liberation Sans',sans-serif;color:#000;letter-spacing:0.346px;">Скворцов</span>
<div class="b" style="left:1265px;top:145px;width:14px;height:19px;background:linear-gradient(#eaf1fb,#bcd0ee);border:1px solid #8fabd6;border-radius:2px;"></div>
<svg style="left:1267px;top:149px" width="10" height="12"><path d="M1.5 1L5 4.5L8.5 1M1.5 6L5 9.5L8.5 6" fill="none" stroke="#000" stroke-width="1.8"/></svg>
<div class="b" style="left:0px;top:164px;width:1280px;height:2px;background:#7d9fd0;"></div>
<div class="b" style="left:0px;top:166px;width:1280px;height:3px;background:linear-gradient(#e8f0fb,#d4e2f5);"></div>
<div class="b" style="left:0px;top:168px;width:1280px;height:1px;background:#9eb6ce;"></div>
<div class="b" style="left:0px;top:169px;width:1265px;height:723px;background:#fff;"></div>
<div class="b" style="left:0px;top:169px;width:26px;height:723px;background:#e4ecf7;border-right:1px solid #9eb6ce;"></div>
<div class="b" style="left:0px;top:169px;width:1265px;height:17px;background:linear-gradient(#f9fbfd 0,#e9eef6 45%,#d9e1ee 100%);border-bottom:1px solid #9eb6ce;"></div>
<div class="b" style="left:0px;top:169px;width:26px;height:17px;background:#b4c7e3;border-right:1px solid #9eb6ce;border-bottom:1px solid #9eb6ce;"></div>
<svg style="left:13px;top:175px" width="10" height="10"><path d="M9 0V9H0Z" fill="#dce6f4"/></svg>
<div class="b" style="left:26px;top:169px;width:90px;height:17px;background:linear-gradient(#f9d9a0 0,#f5c779 60%,#f2b95c 100%);border-bottom:1px solid #f29536;border-right:1px solid #f29536;"></div>
<div class="b" style="left:199px;top:169px;width:1px;height:16px;background:#9eb6ce;"></div>
<div class="b" style="left:346px;top:169px;width:1px;height:16px;background:#9eb6ce;"></div>
<div class="b" style="left:476px;top:169px;width:1px;height:16px;background:#9eb6ce;"></div>
<div class="b" style="left:540px;top:169px;width:1px;height:16px;background:#9eb6ce;"></div>
<div class="b" style="left:604px;top:169px;width:1px;height:16px;background:#9eb6ce;"></div>
<div class="b" style="left:668px;top:169px;width:1px;height:16px;background:#9eb6ce;"></div>
<div class="b" style="left:732px;top:169px;width:1px;height:16px;background:#9eb6ce;"></div>
<div class="b" style="left:796px;top:169px;width:1px;height:16px;background:#9eb6ce;"></div>
<div class="b" style="left:860px;top:169px;width:1px;height:16px;background:#9eb6ce;"></div>
<div class="b" style="left:924px;top:169px;width:1px;height:16px;background:#9eb6ce;"></div>
<div class="b" style="left:988px;top:169px;width:1px;height:16px;background:#9eb6ce;"></div>
<div class="b" style="left:1052px;top:169px;width:1px;height:16px;background:#9eb6ce;"></div>
<div class="b" style="left:1116px;top:169px;width:1px;height:16px;background:#9eb6ce;"></div>
<div class="b" style="left:1180px;top:169px;width:1px;height:16px;background:#9eb6ce;"></div>
<div class="b" style="left:1244px;top:169px;width:1px;height:16px;background:#9eb6ce;"></div>
<div class="b" style="left:115px;top:169px;width:1px;height:16px;background:#f29536;"></div>
<span class="t" style="left:66.33px;top:168.15px;font:14px/18px 'Liberation Sans',sans-serif;color:#27364a;">A</span>
<span class="t" style="left:153.33px;top:168.15px;font:14px/18px 'Liberation Sans',sans-serif;color:#27364a;">B</span>
<span class="t" style="left:268.44px;top:168.15px;font:14px/18px 'Liberation Sans',sans-serif;color:#27364a;">C</span>
<span class="t" style="left:406.94px;top:168.15px;font:14px/18px 'Liberation Sans',sans-serif;color:#27364a;">D</span>
<span class="t" style="left:504.33px;top:168.15px;font:14px/18px 'Liberation Sans',sans-serif;color:#27364a;">E</span>
<span class="t" style="left:568.72px;top:168.15px;font:14px/18px 'Liberation Sans',sans-serif;color:#27364a;">F</span>
<span class="t" style="left:631.55px;top:168.15px;font:14px/18px 'Liberation Sans',sans-serif;color:#27364a;">G</span>
<span class="t" style="left:695.94px;top:168.15px;font:14px/18px 'Liberation Sans',sans-serif;color:#27364a;">H</span>
<span class="t" style="left:763.05px;top:168.15px;font:14px/18px 'Liberation Sans',sans-serif;color:#27364a;">I</span>
<span class="t" style="left:825.50px;top:168.15px;font:14px/18px 'Liberation Sans',sans-serif;color:#27364a;">J</span>
<span class="t" style="left:888.33px;top:168.15px;font:14px/18px 'Liberation Sans',sans-serif;color:#27364a;">K</span>
<span class="t" style="left:953.10px;top:168.15px;font:14px/18px 'Liberation Sans',sans-serif;color:#27364a;">L</span>
<span class="t" style="left:1015.16px;top:168.15px;font:14px/18px 'Liberation Sans',sans-serif;color:#27364a;">M</span>
<span class="t" style="left:1079.94px;top:168.15px;font:14px/18px 'Liberation Sans',sans-serif;color:#27364a;">N</span>
<span class="t" style="left:1143.55px;top:168.15px;font:14px/18px 'Liberation Sans',sans-serif;color:#27364a;">O</span>
<span class="t" style="left:1208.33px;top:168.15px;font:14px/18px 'Liberation Sans',sans-serif;color:#27364a;">P</span>
<div class="b" style="left:26px;top:206px;width:1239px;height:1px;background:#d0d7e5;"></div>
<div class="b" style="left:26px;top:223px;width:1239px;height:1px;background:#d0d7e5;"></div>
<div class="b" style="left:26px;top:240px;width:1239px;height:1px;background:#d0d7e5;"></div>
<div class="b" style="left:26px;top:257px;width:1239px;height:1px;background:#d0d7e5;"></div>
<div class="b" style="left:26px;top:274px;width:1239px;height:1px;background:#d0d7e5;"></div>
<div class="b" style="left:26px;top:291px;width:1239px;height:1px;background:#d0d7e5;"></div>
<div class="b" style="left:26px;top:308px;width:1239px;height:1px;background:#d0d7e5;"></div>
<div class="b" style="left:26px;top:325px;width:1239px;height:1px;background:#d0d7e5;"></div>
<div class="b" style="left:26px;top:342px;width:1239px;height:1px;background:#d0d7e5;"></div>
<div class="b" style="left:26px;top:359px;width:1239px;height:1px;background:#d0d7e5;"></div>
<div class="b" style="left:26px;top:376px;width:1239px;height:1px;background:#d0d7e5;"></div>
<div class="b" style="left:26px;top:393px;width:1239px;height:1px;background:#d0d7e5;"></div>
<div class="b" style="left:26px;top:410px;width:1239px;height:1px;background:#d0d7e5;"></div>
<div class="b" style="left:26px;top:427px;width:1239px;height:1px;background:#d0d7e5;"></div>
<div class="b" style="left:26px;top:444px;width:1239px;height:1px;background:#d0d7e5;"></div>
<div class="b" style="left:26px;top:461px;width:1239px;height:1px;background:#d0d7e5;"></div>
<div class="b" style="left:26px;top:478px;width:1239px;height:1px;background:#d0d7e5;"></div>
<div class="b" style="left:26px;top:495px;width:1239px;height:1px;background:#d0d7e5;"></div>
<div class="b" style="left:26px;top:512px;width:1239px;height:1px;background:#d0d7e5;"></div>
<div class="b" style="left:26px;top:529px;width:1239px;height:1px;background:#d0d7e5;"></div>
<div class="b" style="left:26px;top:546px;width:1239px;height:1px;background:#d0d7e5;"></div>
<div class="b" style="left:26px;top:563px;width:1239px;height:1px;background:#d0d7e5;"></div>
<div class="b" style="left:26px;top:580px;width:1239px;height:1px;background:#d0d7e5;"></div>
<div class="b" style="left:26px;top:597px;width:1239px;height:1px;background:#d0d7e5;"></div>
<div class="b" style="left:26px;top:614px;width:1239px;height:1px;background:#d0d7e5;"></div>
<div class="b" style="left:26px;top:631px;width:1239px;height:1px;background:#d0d7e5;"></div>
<div class="b" style="left:26px;top:648px;width:1239px;height:1px;background:#d0d7e5;"></div>
<div class="b" style="left:26px;top:665px;width:1239px;height:1px;background:#d0d7e5;"></div>
<div class="b" style="left:26px;top:682px;width:1239px;height:1px;background:#d0d7e5;"></div>
<div class="b" style="left:26px;top:699px;width:1239px;height:1px;background:#d0d7e5;"></div>
<div class="b" style="left:26px;top:716px;width:1239px;height:1px;background:#d0d7e5;"></div>
<div class="b" style="left:26px;top:733px;width:1239px;height:1px;background:#d0d7e5;"></div>
<div class="b" style="left:26px;top:750px;width:1239px;height:1px;background:#d0d7e5;"></div>
<div class="b" style="left:26px;top:767px;width:1239px;height:1px;background:#d0d7e5;"></div>
<div class="b" style="left:26px;top:784px;width:1239px;height:1px;background:#d0d7e5;"></div>
<div class="b" style="left:26px;top:801px;width:1239px;height:1px;background:#d0d7e5;"></div>
<div class="b" style="left:26px;top:818px;width:1239px;height:1px;background:#d0d7e5;"></div>
<div class="b" style="left:26px;top:835px;width:1239px;height:1px;background:#d0d7e5;"></div>
<div class="b" style="left:26px;top:852px;width:1239px;height:1px;background:#d0d7e5;"></div>
<div class="b" style="left:26px;top:869px;width:1239px;height:1px;background:#d0d7e5;"></div>
<div class="b" style="left:26px;top:886px;width:1239px;height:1px;background:#d0d7e5;"></div>
<div class="b" style="left:115px;top:186px;width:1px;height:706px;background:#d0d7e5;"></div>
<div class="b" style="left:199px;top:186px;width:1px;height:706px;background:#d0d7e5;"></div>
<div class="b" style="left:346px;top:186px;width:1px;height:706px;background:#d0d7e5;"></div>
<div class="b" style="left:476px;top:186px;width:1px;height:706px;background:#d0d7e5;"></div>
<div class="b" style="left:540px;top:186px;width:1px;height:706px;background:#d0d7e5;"></div>
<div class="b" style="left:604px;top:186px;width:1px;height:706px;background:#d0d7e5;"></div>
<div class="b" style="left:668px;top:186px;width:1px;height:706px;background:#d0d7e5;"></div>
<div class="b" style="left:732px;top:186px;width:1px;height:706px;background:#d0d7e5;"></div>
<div class="b" style="left:796px;top:186px;width:1px;height:706px;background:#d0d7e5;"></div>
<div class="b" style="left:860px;top:186px;width:1px;height:706px;background:#d0d7e5;"></div>
<div class="b" style="left:924px;top:186px;width:1px;height:706px;background:#d0d7e5;"></div>
<div class="b" style="left:988px;top:186px;width:1px;height:706px;background:#d0d7e5;"></div>
<div class="b" style="left:1052px;top:186px;width:1px;height:706px;background:#d0d7e5;"></div>
<div class="b" style="left:1116px;top:186px;width:1px;height:706px;background:#d0d7e5;"></div>
<div class="b" style="left:1180px;top:186px;width:1px;height:706px;background:#d0d7e5;"></div>
<div class="b" style="left:1244px;top:186px;width:1px;height:706px;background:#d0d7e5;"></div>
<div class="b" style="left:0px;top:206px;width:25px;height:1px;background:#9eb6ce;"></div>
<div class="b" style="left:0px;top:223px;width:25px;height:1px;background:#9eb6ce;"></div>
<div class="b" style="left:0px;top:240px;width:25px;height:1px;background:#9eb6ce;"></div>
<div class="b" style="left:0px;top:257px;width:25px;height:1px;background:#9eb6ce;"></div>
<div class="b" style="left:0px;top:274px;width:25px;height:1px;background:#9eb6ce;"></div>
<div class="b" style="left:0px;top:291px;width:25px;height:1px;background:#9eb6ce;"></div>
<div class="b" style="left:0px;top:308px;width:25px;height:1px;background:#9eb6ce;"></div>
<div class="b" style="left:0px;top:325px;width:25px;height:1px;background:#9eb6ce;"></div>
<div class="b" style="left:0px;top:342px;width:25px;height:1px;background:#9eb6ce;"></div>
<div class="b" style="left:0px;top:359px;width:25px;height:1px;background:#9eb6ce;"></div>
<div class="b" style="left:0px;top:376px;width:25px;height:1px;background:#9eb6ce;"></div>
<div class="b" style="left:0px;top:393px;width:25px;height:1px;background:#9eb6ce;"></div>
<div class="b" style="left:0px;top:410px;width:25px;height:1px;background:#9eb6ce;"></div>
<div class="b" style="left:0px;top:427px;width:25px;height:1px;background:#9eb6ce;"></div>
<div class="b" style="left:0px;top:444px;width:25px;height:1px;background:#9eb6ce;"></div>
<div class="b" style="left:0px;top:461px;width:25px;height:1px;background:#9eb6ce;"></div>
<div class="b" style="left:0px;top:478px;width:25px;height:1px;background:#9eb6ce;"></div>
<div class="b" style="left:0px;top:495px;width:25px;height:1px;background:#9eb6ce;"></div>
<div class="b" style="left:0px;top:512px;width:25px;height:1px;background:#9eb6ce;"></div>
<div class="b" style="left:0px;top:529px;width:25px;height:1px;background:#9eb6ce;"></div>
<div class="b" style="left:0px;top:546px;width:25px;height:1px;background:#9eb6ce;"></div>
<div class="b" style="left:0px;top:563px;width:25px;height:1px;background:#9eb6ce;"></div>
<div class="b" style="left:0px;top:580px;width:25px;height:1px;background:#9eb6ce;"></div>
<div class="b" style="left:0px;top:597px;width:25px;height:1px;background:#9eb6ce;"></div>
<div class="b" style="left:0px;top:614px;width:25px;height:1px;background:#9eb6ce;"></div>
<div class="b" style="left:0px;top:631px;width:25px;height:1px;background:#9eb6ce;"></div>
<div class="b" style="left:0px;top:648px;width:25px;height:1px;background:#9eb6ce;"></div>
<div class="b" style="left:0px;top:665px;width:25px;height:1px;background:#9eb6ce;"></div>
<div class="b" style="left:0px;top:682px;width:25px;height:1px;background:#9eb6ce;"></div>
<div class="b" style="left:0px;top:699px;width:25px;height:1px;background:#9eb6ce;"></div>
<div class="b" style="left:0px;top:716px;width:25px;height:1px;background:#9eb6ce;"></div>
<div class="b" style="left:0px;top:733px;width:25px;height:1px;background:#9eb6ce;"></div>
<div class="b" style="left:0px;top:750px;width:25px;height:1px;background:#9eb6ce;"></div>
<div class="b" style="left:0px;top:767px;width:25px;height:1px;background:#9eb6ce;"></div>
<div class="b" style="left:0px;top:784px;width:25px;height:1px;background:#9eb6ce;"></div>
<div class="b" style="left:0px;top:801px;width:25px;height:1px;background:#9eb6ce;"></div>
<div class="b" style="left:0px;top:818px;width:25px;height:1px;background:#9eb6ce;"></div>
<div class="b" style="left:0px;top:835px;width:25px;height:1px;background:#9eb6ce;"></div>
<div class="b" style="left:0px;top:852px;width:25px;height:1px;background:#9eb6ce;"></div>
<div class="b" style="left:0px;top:869px;width:25px;height:1px;background:#9eb6ce;"></div>
<div class="b" style="left:0px;top:886px;width:25px;height:1px;background:#9eb6ce;"></div>
<div class="b" style="left:0px;top:224px;width:26px;height:16px;background:linear-gradient(90deg,#f9d9a0,#f5c779);border-right:1px solid #f29536;"></div>
<div class="b" style="left:0px;top:223px;width:26px;height:1px;background:#f29536;"></div>
<div class="b" style="left:0px;top:240px;width:26px;height:1px;background:#f29536;"></div>
<span class="t" style="left:9.10px;top:187.15px;font:14px/18px 'Liberation Sans',sans-serif;color:#27364a;">1</span>
<span class="t" style="left:9.10px;top:206.15px;font:14px/18px 'Liberation Sans',sans-serif;color:#27364a;">2</span>
<span class="t" style="left:9.10px;top:223.15px;font:14px/18px 'Liberation Sans',sans-serif;color:#27364a;">3</span>
<span class="t" style="left:9.10px;top:240.15px;font:14px/18px 'Liberation Sans',sans-serif;color:#27364a;">4</span>
<span class="t" style="left:9.10px;top:257.15px;font:14px/18px 'Liberation Sans',sans-serif;color:#27364a;">5</span>
<span class="t" style="left:9.10px;top:274.15px;font:14px/18px 'Liberation Sans',sans-serif;color:#27364a;">6</span>
<span class="t" style="left:9.10px;top:291.15px;font:14px/18px 'Liberation Sans',sans-serif;color:#27364a;">7</span>
<span class="t" style="left:9.10px;top:308.15px;font:14px/18px 'Liberation Sans',sans-serif;color:#27364a;">8</span>
<span class="t" style="left:9.10px;top:325.15px;font:14px/18px 'Liberation Sans',sans-serif;color:#27364a;">9</span>
<span class="t" style="left:6.15px;top:342.15px;font:14px/18px 'Liberation Sans',sans-serif;color:#27364a;letter-spacing:-0.939px;">10</span>
<span class="t" style="left:6.15px;top:359.15px;font:14px/18px 'Liberation Sans',sans-serif;color:#27364a;letter-spacing:-0.423px;">11</span>
<span class="t" style="left:6.15px;top:376.15px;font:14px/18px 'Liberation Sans',sans-serif;color:#27364a;letter-spacing:-0.939px;">12</span>
<span class="t" style="left:6.15px;top:393.15px;font:14px/18px 'Liberation Sans',sans-serif;color:#27364a;letter-spacing:-0.939px;">13</span>
<span class="t" style="left:6.15px;top:410.15px;font:14px/18px 'Liberation Sans',sans-serif;color:#27364a;letter-spacing:-0.939px;">14</span>
<span class="t" style="left:6.15px;top:427.15px;font:14px/18px 'Liberation Sans',sans-serif;color:#27364a;letter-spacing:-0.939px;">15</span>
<span class="t" style="left:6.15px;top:444.15px;font:14px/18px 'Liberation Sans',sans-serif;color:#27364a;letter-spacing:-0.939px;">16</span>
<span class="t" style="left:6.15px;top:461.15px;font:14px/18px 'Liberation Sans',sans-serif;color:#27364a;letter-spacing:-0.939px;">17</span>
<span class="t" style="left:6.15px;top:478.15px;font:14px/18px 'Liberation Sans',sans-serif;color:#27364a;letter-spacing:-0.939px;">18</span>
<span class="t" style="left:6.15px;top:495.15px;font:14px/18px 'Liberation Sans',sans-serif;color:#27364a;letter-spacing:-0.939px;">19</span>
<span class="t" style="left:6.15px;top:512.15px;font:14px/18px 'Liberation Sans',sans-serif;color:#27364a;letter-spacing:-0.939px;">20</span>
<span class="t" style="left:6.15px;top:529.15px;font:14px/18px 'Liberation Sans',sans-serif;color:#27364a;letter-spacing:-0.939px;">21</span>
<span class="t" style="left:6.15px;top:546.15px;font:14px/18px 'Liberation Sans',sans-serif;color:#27364a;letter-spacing:-0.939px;">22</span>
<span class="t" style="left:6.15px;top:563.15px;font:14px/18px 'Liberation Sans',sans-serif;color:#27364a;letter-spacing:-0.939px;">23</span>
<span class="t" style="left:6.15px;top:580.15px;font:14px/18px 'Liberation Sans',sans-serif;color:#27364a;letter-spacing:-0.939px;">24</span>
<span class="t" style="left:6.15px;top:597.15px;font:14px/18px 'Liberation Sans',sans-serif;color:#27364a;letter-spacing:-0.939px;">25</span>
<span class="t" style="left:6.15px;top:614.15px;font:14px/18px 'Liberation Sans',sans-serif;color:#27364a;letter-spacing:-0.939px;">26</span>
<span class="t" style="left:6.15px;top:631.15px;font:14px/18px 'Liberation Sans',sans-serif;color:#27364a;letter-spacing:-0.939px;">27</span>
<span class="t" style="left:6.15px;top:648.15px;font:14px/18px 'Liberation Sans',sans-serif;color:#27364a;letter-spacing:-0.939px;">28</span>
<span class="t" style="left:6.15px;top:665.15px;font:14px/18px 'Liberation Sans',sans-serif;color:#27364a;letter-spacing:-0.939px;">29</span>
<span class="t" style="left:6.15px;top:682.15px;font:14px/18px 'Liberation Sans',sans-serif;color:#27364a;letter-spacing:-0.939px;">30</span>
<span class="t" style="left:6.15px;top:699.15px;font:14px/18px 'Liberation Sans',sans-serif;color:#27364a;letter-spacing:-0.939px;">31</span>
<span class="t" style="left:6.15px;top:716.15px;font:14px/18px 'Liberation Sans',sans-serif;color:#27364a;letter-spacing:-0.939px;">32</span>
<span class="t" style="left:6.15px;top:733.15px;font:14px/18px 'Liberation Sans',sans-serif;color:#27364a;letter-spacing:-0.939px;">33</span>
<span class="t" style="left:6.15px;top:750.15px;font:14px/18px 'Liberation Sans',sans-serif;color:#27364a;letter-spacing:-0.939px;">34</span>
<span class="t" style="left:6.15px;top:767.15px;font:14px/18px 'Liberation Sans',sans-serif;color:#27364a;letter-spacing:-0.939px;">35</span>
<span class="t" style="left:6.15px;top:784.15px;font:14px/18px 'Liberation Sans',sans-serif;color:#27364a;letter-spacing:-0.939px;">36</span>
<span class="t" style="left:6.15px;top:801.15px;font:14px/18px 'Liberation Sans',sans-serif;color:#27364a;letter-spacing:-0.939px;">37</span>
<span class="t" style="left:6.15px;top:818.15px;font:14px/18px 'Liberation Sans',sans-serif;color:#27364a;letter-spacing:-0.939px;">38</span>
<span class="t" style="left:6.15px;top:835.15px;font:14px/18px 'Liberation Sans',sans-serif;color:#27364a;letter-spacing:-0.939px;">39</span>
<span class="t" style="left:6.15px;top:852.15px;font:14px/18px 'Liberation Sans',sans-serif;color:#27364a;letter-spacing:-0.939px;">40</span>
<span class="t" style="left:6.15px;top:869.15px;font:14px/18px 'Liberation Sans',sans-serif;color:#27364a;letter-spacing:-0.939px;">41</span>
<span class="t" style="left:6.15px;top:886.15px;font:14px/18px 'Liberation Sans',sans-serif;color:#27364a;letter-spacing:-0.939px;">42</span>
<span class="t" style="left:138.00px;top:185.56px;font:bold 16px/21px 'Liberation Sans',sans-serif;color:#000;letter-spacing:0.071px;">Заработная плата за январь</span>
<div class="b" style="left:26px;top:207px;width:451px;height:16px;background:#4f81bd;"></div>
<div class="b" style="left:26px;top:207px;width:73px;height:16px;overflow:hidden">
<span class="t" style="left:14.36px;top:-0.85px;font:bold 14px/18px 'Liberation Sans',sans-serif;color:#fff;letter-spacing:-0.442px;">Фамилия</span>
</div>
<div class="b" style="left:99px;top:207px;width:16px;height:16px;background:linear-gradient(#f4f4f2 0,#e4e4e0 50%,#cfd0cc 100%);border:1px solid #a9a9a4;border-radius:2px;"></div>
<svg style="left:103px;top:213px" width="8" height="5"><path d="M0 0H8L4 4.5Z" fill="#2d3f7c"/></svg>
<div class="b" style="left:116px;top:207px;width:67px;height:16px;overflow:hidden">
<span class="t" style="left:11.11px;top:-0.85px;font:bold 14px/18px 'Liberation Sans',sans-serif;color:#fff;letter-spacing:-0.389px;">Зарплата</span>
</div>
<div class="b" style="left:183px;top:207px;width:16px;height:16px;background:linear-gradient(#f4f4f2 0,#e4e4e0 50%,#cfd0cc 100%);border:1px solid #a9a9a4;border-radius:2px;"></div>
<svg style="left:187px;top:213px" width="8" height="5"><path d="M0 0H8L4 4.5Z" fill="#2d3f7c"/></svg>
<div class="b" style="left:200px;top:207px;width:130px;height:16px;overflow:hidden">
<span class="t" style="left:10.45px;top:-0.85px;font:bold 14px/18px 'Liberation Sans',sans-serif;color:#fff;letter-spacing:-0.396px;">Подоходный налог</span>
</div>
<div class="b" style="left:330px;top:207px;width:16px;height:16px;background:linear-gradient(#f4f4f2 0,#e4e4e0 50%,#cfd0cc 100%);border:1px solid #a9a9a4;border-radius:2px;"></div>
<svg style="left:334px;top:213px" width="8" height="5"><path d="M0 0H8L4 4.5Z" fill="#2d3f7c"/></svg>
<div class="b" style="left:347px;top:207px;width:113px;height:16px;overflow:hidden">
<span class="t" style="left:10.91px;top:-0.85px;font:bold 14px/18px 'Liberation Sans',sans-serif;color:#fff;letter-spacing:-0.390px;">Сумма к выдаче</span>
</div>
<div class="b" style="left:460px;top:207px;width:16px;height:16px;background:linear-gradient(#f4f4f2 0,#e4e4e0 50%,#cfd0cc 100%);border:1px solid #a9a9a4;border-radius:2px;"></div>
<svg style="left:464px;top:213px" width="8" height="5"><path d="M0 0H8L4 4.5Z" fill="#2d3f7c"/></svg>
<div class="b" style="left:26px;top:224px;width:451px;height:17px;background:#b8cce4;border-bottom:1px solid #fff;"></div>
<div class="b" style="left:115px;top:224px;width:1px;height:17px;background:#fff;"></div>
<div class="b" style="left:199px;top:224px;width:1px;height:17px;background:#fff;"></div>
<div class="b" style="left:346px;top:224px;width:1px;height:17px;background:#fff;"></div>
<span class="t" style="left:27.50px;top:223.15px;font:14px/18px 'Liberation Sans',sans-serif;color:#000;letter-spacing:-0.648px;">Скворцов</span>
<span class="t" style="left:169.40px;top:223.15px;font:14px/18px 'Liberation Sans',sans-serif;color:#000;letter-spacing:-0.939px;">7000</span>
<span class="t" style="left:323.25px;top:223.15px;font:14px/18px 'Liberation Sans',sans-serif;color:#000;letter-spacing:-0.936px;">910</span>
<span class="t" style="left:446.10px;top:223.15px;font:bold 14px/18px 'Liberation Sans',sans-serif;color:#000;letter-spacing:-0.839px;">6090</span>
<div class="b" style="left:26px;top:241px;width:451px;height:17px;background:#dce6f1;border-bottom:1px solid #fff;"></div>
<div class="b" style="left:115px;top:241px;width:1px;height:17px;background:#fff;"></div>
<div class="b" style="left:199px;top:241px;width:1px;height:17px;background:#fff;"></div>
<div class="b" style="left:346px;top:241px;width:1px;height:17px;background:#fff;"></div>
<span class="t" style="left:27.50px;top:240.15px;font:14px/18px 'Liberation Sans',sans-serif;color:#000;letter-spacing:-0.662px;">Петухов</span>
<span class="t" style="left:169.40px;top:240.15px;font:14px/18px 'Liberation Sans',sans-serif;color:#000;letter-spacing:-0.939px;">6500</span>
<span class="t" style="left:323.25px;top:240.15px;font:14px/18px 'Liberation Sans',sans-serif;color:#000;letter-spacing:-0.936px;">845</span>
<span class="t" style="left:446.10px;top:240.15px;font:bold 14px/18px 'Liberation Sans',sans-serif;color:#000;letter-spacing:-0.839px;">5655</span>
<div class="b" style="left:26px;top:258px;width:451px;height:17px;background:#b8cce4;border-bottom:1px solid #fff;"></div>
<div class="b" style="left:115px;top:258px;width:1px;height:17px;background:#fff;"></div>
<div class="b" style="left:199px;top:258px;width:1px;height:17px;background:#fff;"></div>
<div class="b" style="left:346px;top:258px;width:1px;height:17px;background:#fff;"></div>
<span class="t" style="left:27.50px;top:257.15px;font:14px/18px 'Liberation Sans',sans-serif;color:#000;letter-spacing:-0.729px;">Воробьев</span>
<span class="t" style="left:169.40px;top:257.15px;font:14px/18px 'Liberation Sans',sans-serif;color:#000;letter-spacing:-0.939px;">8000</span>
<span class="t" style="left:316.40px;top:257.15px;font:14px/18px 'Liberation Sans',sans-serif;color:#000;letter-spacing:-0.939px;">1040</span>
<span class="t" style="left:446.10px;top:257.15px;font:bold 14px/18px 'Liberation Sans',sans-serif;color:#000;letter-spacing:-0.839px;">6960</span>
<div class="b" style="left:26px;top:275px;width:451px;height:17px;background:#dce6f1;border-bottom:1px solid #fff;"></div>
<div class="b" style="left:115px;top:275px;width:1px;height:17px;background:#fff;"></div>
<div class="b" style="left:199px;top:275px;width:1px;height:17px;background:#fff;"></div>
<div class="b" style="left:346px;top:275px;width:1px;height:17px;background:#fff;"></div>
<span class="t" style="left:27.50px;top:274.15px;font:14px/18px 'Liberation Sans',sans-serif;color:#000;letter-spacing:-0.887px;">Синицына</span>
<span class="t" style="left:169.40px;top:274.15px;font:14px/18px 'Liberation Sans',sans-serif;color:#000;letter-spacing:-0.939px;">6800</span>
<span class="t" style="left:323.25px;top:274.15px;font:14px/18px 'Liberation Sans',sans-serif;color:#000;letter-spacing:-0.936px;">884</span>
<span class="t" style="left:446.10px;top:274.15px;font:bold 14px/18px 'Liberation Sans',sans-serif;color:#000;letter-spacing:-0.839px;">5916</span>
<div class="b" style="left:26px;top:292px;width:451px;height:17px;background:#b8cce4;border-bottom:1px solid #fff;"></div>
<div class="b" style="left:115px;top:292px;width:1px;height:17px;background:#fff;"></div>
<div class="b" style="left:199px;top:292px;width:1px;height:17px;background:#fff;"></div>
<div class="b" style="left:346px;top:292px;width:1px;height:17px;background:#fff;"></div>
<span class="t" style="left:27.50px;top:291.15px;font:14px/18px 'Liberation Sans',sans-serif;color:#000;letter-spacing:-0.699px;">Иванов</span>
<span class="t" style="left:169.40px;top:291.15px;font:14px/18px 'Liberation Sans',sans-serif;color:#000;letter-spacing:-0.939px;">9200</span>
<span class="t" style="left:316.40px;top:291.15px;font:14px/18px 'Liberation Sans',sans-serif;color:#000;letter-spacing:-0.677px;">1196</span>
<span class="t" style="left:446.10px;top:291.15px;font:bold 14px/18px 'Liberation Sans',sans-serif;color:#000;letter-spacing:-0.839px;">8004</span>
<div class="b" style="left:26px;top:309px;width:451px;height:17px;background:#dce6f1;border-bottom:1px solid #fff;"></div>
<div class="b" style="left:115px;top:309px;width:1px;height:17px;background:#fff;"></div>
<div class="b" style="left:199px;top:309px;width:1px;height:17px;background:#fff;"></div>
<div class="b" style="left:346px;top:309px;width:1px;height:17px;background:#fff;"></div>
<span class="t" style="left:27.50px;top:308.15px;font:14px/18px 'Liberation Sans',sans-serif;color:#000;letter-spacing:-0.729px;">Сидоров</span>
<span class="t" style="left:169.40px;top:308.15px;font:14px/18px 'Liberation Sans',sans-serif;color:#000;letter-spacing:-0.939px;">7600</span>
<span class="t" style="left:323.25px;top:308.15px;font:14px/18px 'Liberation Sans',sans-serif;color:#000;letter-spacing:-0.936px;">988</span>
<span class="t" style="left:446.10px;top:308.15px;font:bold 14px/18px 'Liberation Sans',sans-serif;color:#000;letter-spacing:-0.839px;">6612</span>
<div class="b" style="left:26px;top:326px;width:451px;height:17px;background:#b8cce4;border-bottom:1px solid #fff;"></div>
<div class="b" style="left:115px;top:326px;width:1px;height:17px;background:#fff;"></div>
<div class="b" style="left:199px;top:326px;width:1px;height:17px;background:#fff;"></div>
<div class="b" style="left:346px;top:326px;width:1px;height:17px;background:#fff;"></div>
<span class="t" style="left:27.50px;top:325.15px;font:14px/18px 'Liberation Sans',sans-serif;color:#000;letter-spacing:-0.586px;">Басин</span>
<span class="t" style="left:162.55px;top:325.15px;font:14px/18px 'Liberation Sans',sans-serif;color:#000;letter-spacing:-0.731px;">11000</span>
<span class="t" style="left:316.40px;top:325.15px;font:14px/18px 'Liberation Sans',sans-serif;color:#000;letter-spacing:-0.939px;">1430</span>
<span class="t" style="left:446.10px;top:325.15px;font:bold 14px/18px 'Liberation Sans',sans-serif;color:#000;letter-spacing:-0.839px;">9570</span>
<div class="b" style="left:26px;top:343px;width:451px;height:17px;background:#dce6f1;border-bottom:1px solid #fff;"></div>
<div class="b" style="left:115px;top:343px;width:1px;height:17px;background:#fff;"></div>
<div class="b" style="left:199px;top:343px;width:1px;height:17px;background:#fff;"></div>
<div class="b" style="left:346px;top:343px;width:1px;height:17px;background:#fff;"></div>
<span class="t" style="left:27.50px;top:342.15px;font:14px/18px 'Liberation Sans',sans-serif;color:#000;letter-spacing:-0.580px;">Кузьмина</span>
<span class="t" style="left:169.40px;top:342.15px;font:14px/18px 'Liberation Sans',sans-serif;color:#000;letter-spacing:-0.939px;">5800</span>
<span class="t" style="left:323.25px;top:342.15px;font:14px/18px 'Liberation Sans',sans-serif;color:#000;letter-spacing:-0.936px;">754</span>
<span class="t" style="left:446.10px;top:342.15px;font:bold 14px/18px 'Liberation Sans',sans-serif;color:#000;letter-spacing:-0.839px;">5046</span>
<div class="b" style="left:26px;top:359px;width:451px;height:2px;background:#fff;"></div>
<div class="b" style="left:26px;top:361px;width:451px;height:16px;background:#4f81bd;"></div>
<div class="b" style="left:115px;top:361px;width:1px;height:16px;background:#fff;"></div>
<div class="b" style="left:199px;top:361px;width:1px;height:16px;background:#fff;"></div>
<div class="b" style="left:346px;top:361px;width:1px;height:16px;background:#fff;"></div>
<span class="t" style="left:27.60px;top:359.15px;font:bold 14px/18px 'Liberation Sans',sans-serif;color:#fff;letter-spacing:-0.731px;">Итог</span>
<span class="t" style="left:439.55px;top:359.15px;font:14px/18px 'Liberation Sans',sans-serif;color:#fff;letter-spacing:-0.938px;">53853</span>
<div class="b" style="left:26px;top:223px;width:451px;height:1px;background:#fff;"></div>
<div class="b" style="left:25px;top:222px;width:92px;height:20px;border:3px solid #000;border-left-width:2px;background:transparent;"></div>
<div class="b" style="left:114px;top:239px;width:5px;height:5px;background:#000;border:1px solid #fff;border-right:0;border-bottom:0;"></div>
<svg style="left:0;top:0" width="1280" height="960"><path d="M26 206.500H540V443.500H26" fill="none" stroke="#000" stroke-width="2" stroke-dasharray="4 4"/><path d="M26.500 206V444" stroke="#000" stroke-width="1" stroke-dasharray="4 4"/><path d="M27.500 206.500H476" stroke="#3a5f94" stroke-width="2"/><path d="M27.500 206.500H476" stroke="#d9983e" stroke-width="2" stroke-dasharray="4 4"/></svg>
<div class="b" style="left:1265px;top:169px;width:15px;height:723px;background:linear-gradient(90deg,#86a5d0 0,#7b9bc8 30%,#7696c4 70%,#86a5d0 100%);border-left:1px solid #a9c3e8;"></div>
<div class="b" style="left:1266px;top:170px;width:13px;height:4px;background:#f4f7fb;border:1px solid #9fb4d2;"></div>
<svg style="left:1267px;top:180px" width="11" height="6"><path d="M0 5.5L5.5 0L11 5.5Z" fill="#49587f"/></svg>
<div class="b" style="left:1265px;top:193px;width:15px;height:648px;background:linear-gradient(90deg,#f4f6fa 0,#e3e8f0 35%,#c4cfe1 80%,#d5dcea 100%);border:1px solid #4f648f;border-radius:2px;"></div>
<div class="b" style="left:1269px;top:509px;width:7px;height:1px;background:#6f7f9f;"></div>
<div class="b" style="left:1269px;top:511px;width:7px;height:1px;background:#6f7f9f;"></div>
<div class="b" style="left:1269px;top:513px;width:7px;height:1px;background:#6f7f9f;"></div>
<div class="b" style="left:1269px;top:515px;width:7px;height:1px;background:#6f7f9f;"></div>
<svg style="left:1267px;top:881px" width="11" height="6"><path d="M0 0H11L5.5 5.5Z" fill="#49587f"/></svg>
<div class="b" style="left:0px;top:892px;width:1280px;height:16px;background:linear-gradient(#7f9dcc 0,#9fb8de 18%,#a6bde1 55%,#9cb5db 100%);"></div>
<div class="b" style="left:0px;top:892px;width:62px;height:16px;background:linear-gradient(#e3edfa 0,#cfdff4 50%,#bdd1ee 100%);"></div>
<svg style="left:5px;top:895px" width="54" height="10" fill="#2b4590"><rect x="1" y="0.5" width="1.6" height="9"/><path d="M7.5 0.5V9.5L3 5Z"/><path d="M21.5 0.5V9.5L17 5Z"/><path d="M32 0.5V9.5L36.5 5Z"/><path d="M45 0.5V9.5L49.5 5Z"/><rect x="50" y="0.5" width="1.6" height="9"/></svg>
<svg style="left:0;top:892px" width="420" height="16"><defs><linearGradient id="tg" x1="0" y1="0" x2="0" y2="1"><stop offset="0" stop-color="#f4f8fe"/><stop offset="0.5" stop-color="#dbe7f8"/><stop offset="1" stop-color="#c5d7f0"/></linearGradient></defs><path d="M326 15.5L339 2Q340 0.5 342 0.5H370L357 15.5Z" fill="url(#tg)" stroke="#8aa3c8"/><path d="M276 15.5L289 2Q290 0.5 292 0.5H337L324 14Q322.500 15.5 320 15.5Z" fill="url(#tg)" stroke="#8aa3c8"/><path d="M223 15.5L236 2Q237 0.5 239 0.5H284L271 14Q269.500 15.5 267 15.5Z" fill="url(#tg)" stroke="#8aa3c8"/><path d="M170 15.5L183 2Q184 0.5 186 0.5H231L218 14Q216.500 15.5 214 15.5Z" fill="url(#tg)" stroke="#8aa3c8"/><path d="M62.500 0.5V13Q62.500 15.5 65 15.500H112Q114.500 15.500 114.500 13V0.5Z" fill="url(#tg)" stroke="#8aa3c8"/><path d="M114.500 0V13Q114.500 15.5 117 15.5H162Q165 15.5 167 13.5L180 0Z" fill="#fff" stroke="#8aa3c8"/><rect x="115" y="0" width="64" height="1" fill="#fff"/></svg>
<span class="t" style="left:73.40px;top:892.24px;font:12px/16px 'Liberation Sans',sans-serif;color:#2a3f7a;letter-spacing:0.050px;">Лист1</span>
<span class="t" style="left:125.00px;top:892.24px;font:bold 12px/16px 'Liberation Sans',sans-serif;color:#1b2450;letter-spacing:0.494px;">Лист2</span>
<span class="t" style="left:178.70px;top:892.24px;font:12px/16px 'Liberation Sans',sans-serif;color:#2a3f7a;letter-spacing:0.250px;">Лист3</span>
<span class="t" style="left:232.00px;top:892.24px;font:12px/16px 'Liberation Sans',sans-serif;color:#2a3f7a;letter-spacing:0.250px;">Лист4</span>
<span class="t" style="left:285.00px;top:892.24px;font:12px/16px 'Liberation Sans',sans-serif;color:#2a3f7a;letter-spacing:0.250px;">Лист5</span>
<svg style="left:339px;top:894px" width="16" height="12"><rect x="4.500" y="3.5" width="9" height="7" fill="#fdfdfd" stroke="#6f7fa3"/><path d="M3.500 0.5V6.5M0.500 3.5H6.500M1.400 1.400L5.600 5.600M5.600 1.400L1.400 5.600" stroke="#e0a020" stroke-width="1.100"/></svg>
<div class="b" style="left:757px;top:892px;width:508px;height:16px;background:linear-gradient(#7b9bc8,#7192c2);"></div>
<div class="b" style="left:758px;top:894px;width:4px;height:12px;background:#f4f7fb;border:1px solid #7d92b6;"></div>
<svg style="left:768px;top:895px" width="6" height="10"><path d="M5.500 0V10L0 5Z" fill="#3f4f78"/></svg>
<div class="b" style="left:781px;top:893px;width:402px;height:15px;background:linear-gradient(#f6f8fb 0,#e6eaf2 40%,#c9d3e4 85%,#d5dcea 100%);border:1px solid #4f648f;border-radius:2px;"></div>
<div class="b" style="left:978px;top:897px;width:1px;height:7px;background:#6f7f9f;"></div>
<div class="b" style="left:980px;top:897px;width:1px;height:7px;background:#6f7f9f;"></div>
<div class="b" style="left:982px;top:897px;width:1px;height:7px;background:#6f7f9f;"></div>
<div class="b" style="left:984px;top:897px;width:1px;height:7px;background:#6f7f9f;"></div>
<svg style="left:1246px;top:895px" width="6" height="10"><path d="M0.500 0V10L6 5Z" fill="#3f4f78"/></svg>
<div class="b" style="left:1258px;top:894px;width:4px;height:12px;background:#f4f7fb;border:1px solid #7d92b6;"></div>
<div class="b" style="left:1265px;top:892px;width:15px;height:16px;background:#7b9bc8;"></div>
<div class="b" style="left:0px;top:908px;width:1280px;height:22px;background:linear-gradient(#dbe8fb 0,#cddff7 30%,#b4cef3 34%,#bfd5f4 60%,#d6e4f7 100%);border-top:1px solid #4f6fa8;"></div>
<div class="b" style="left:0px;top:909px;width:1280px;height:1px;background:#eef4fd;"></div>
<span class="t" style="left:7.00px;top:910.84px;font:12px/16px 'Liberation Sans',sans-serif;color:#1e2f6a;letter-spacing:-0.150px;">Укажите</span>
<div class="b" style="left:61px;top:911px;width:1px;height:18px;background:#9db9e2;"></div>
<div class="b" style="left:62px;top:911px;width:1px;height:18px;background:#eef4fd;"></div>
<div class="b" style="left:95px;top:911px;width:1px;height:18px;background:#9db9e2;"></div>
<div class="b" style="left:96px;top:911px;width:1px;height:18px;background:#eef4fd;"></div>
<svg style="left:69px;top:911px" width="18" height="16"><rect x="2.500" y="2.500" width="13" height="11" fill="#fff" stroke="#6f86b8"/><rect x="3" y="3" width="12" height="2.500" fill="#7f9fd8"/><path d="M3 8H15M3 11H15M7 5.5V13M11 5.5V13" stroke="#9aa8c4" stroke-width="0.800"/><circle cx="3.500" cy="3.500" r="3" fill="#d8402c"/></svg>
<div class="b" style="left:1034px;top:910px;width:2px;height:20px;background:#f4f8fe;"></div>
<div class="b" style="left:1036px;top:910px;width:244px;height:20px;background:linear-gradient(#abc6ee 0,#9fbce8 40%,#86a9db 50%,#7fa2d7 80%,#89abdc 100%);"></div>
<div class="b" style="left:1040px;top:910px;width:58px;height:19px;background:linear-gradient(#f6f6f4,#e4e3df 50%,#d6d5d0);border:1px solid #5f82bd;border-radius:3px;"></div>
<svg style="left:1040px;top:910px" width="57" height="18" fill="none" stroke="#5a5a5a"><rect x="4.500" y="4.500" width="11" height="9"/><path d="M4.500 7.500H15.500M4.500 10.500H15.500M8.500 4.500V13.500M12.500 4.500V13.500" stroke-width="0.900"/><rect x="23.500" y="3.500" width="11" height="11"/><rect x="26.500" y="6.500" width="5" height="6" stroke-width="0.900"/><rect x="41.500" y="3.500" width="11" height="11"/><path d="M45.500 3.500V10.500M49.500 3.500V10.500M41.500 10.500H52.500" stroke-width="0.900"/></svg>
<div class="b" style="left:1059px;top:911px;width:1px;height:16px;background:#c4c8d0;"></div>
<div class="b" style="left:1078px;top:911px;width:1px;height:16px;background:#c4c8d0;"></div>
<span class="t" style="left:1105.00px;top:910.84px;font:12px/16px 'Liberation Sans',sans-serif;color:#8a8f98;letter-spacing:-1.051px;">100%</span>
<svg style="left:1140px;top:910px" width="138" height="18"><path d="M17 9.500H119" stroke="#7f93b8"/><path d="M17 10.500H119" stroke="#f2f6fc"/><path d="M68.500 5V14" stroke="#7f93b8"/><circle cx="9" cy="9" r="7" fill="#f2f5fa" stroke="#7b8db0"/><path d="M5 9H13" stroke="#4f5f86" stroke-width="2"/><circle cx="126.500" cy="9" r="7" fill="#f2f5fa" stroke="#7b8db0"/><path d="M122.500 9H130.500M126.500 5V13" stroke="#4f5f86" stroke-width="2"/></svg>
<div class="b" style="left:0px;top:930px;width:1280px;height:30px;background:linear-gradient(#1f56cc 0,#3a80ec 5%,#3f86ee 10%,#2b68de 20%,#2460dc 30%,#245ddb 60%,#2157cf 88%,#1b47b0 100%);"></div>
<div class="b" style="left:0px;top:930px;width:96px;height:30px;background:linear-gradient(#58ad55 0,#3c973b 12%,#358d38 50%,#2e8131 85%,#23692a 100%);border-radius:0 11px 13px 0/0 15px 15px 0;box-shadow:1px 0 2px #1d3f9a;"></div>
<svg style="left:10px;top:935px" width="20" height="20"><path d="M2.500 3.500Q6 1.500 9.500 3.500L8.500 9.500Q5 7.500 1.500 9.500Z" fill="#e8532b"/><path d="M10.500 4Q14 6 17.500 4L16.500 10Q13 12 9.500 10Z" fill="#7cc142"/><path d="M1.300 10.500Q4.800 8.500 8.300 10.500L7.300 16.500Q3.800 14.500 0.300 16.500Z" fill="#3f7fe0"/><path d="M9.300 11Q12.800 13 16.300 11L15.300 17Q11.800 19 8.300 17Z" fill="#f6c52b"/></svg>
<span class="t" style="left:35.00px;top:934.11px;font:italic bold 17px/22px 'Liberation Sans',sans-serif;color:#fff;letter-spacing:-0.480px;text-shadow:1px 1px 1px #2a5a22;">пуск</span>
<svg style="left:107px;top:936px" width="46" height="18"><circle cx="9" cy="9" r="7.500" fill="#4f93dc" stroke="#a8cdf4"/><circle cx="9" cy="9" r="3.200" fill="#f2b84a"/><rect x="25" y="2" width="13" height="14" rx="2" fill="#f0f4fa" stroke="#5f8fd6"/><path d="M28 6H35M28 9H35M28 12H33" stroke="#3d6fc0" stroke-width="1.300"/><circle cx="38" cy="5" r="1.800" fill="#e85d2a"/></svg>
<div class="b" style="left:158px;top:934px;width:158px;height:24px;background:linear-gradient(#5f9af2 0,#3c7ee9 12%,#3576e4 50%,#2f6cd9 88%,#2a5fc4 100%);border:1px solid #2a5cc0;border-radius:3px;"></div>
<span class="t" style="left:186.00px;top:939.69px;font:11px/14px 'DejaVu Sans Condensed','DejaVu Sans',sans-serif;color:#fff;letter-spacing:-0.181px;">4.12.09</span>
<svg style="left:167px;top:937px" width="16" height="16"><path d="M1 4.500Q1 3 2.500 3H6L7.500 4.500H13.500Q15 4.500 15 6V12Q15 13.500 13.500 13.500H2.500Q1 13.500 1 12Z" fill="#f3cf5e" stroke="#b98a1e"/><path d="M1.500 7H14.500" stroke="#fae9a6"/></svg>
<div class="b" style="left:318px;top:934px;width:158px;height:24px;background:linear-gradient(#5f9af2 0,#3c7ee9 12%,#3576e4 50%,#2f6cd9 88%,#2a5fc4 100%);border:1px solid #2a5cc0;border-radius:3px;"></div>
<span class="t" style="left:346.00px;top:939.69px;font:11px/14px 'DejaVu Sans Condensed','DejaVu Sans',sans-serif;color:#fff;letter-spacing:-0.167px;">Мои Задания по Excel</span>
<svg style="left:327px;top:937px" width="16" height="16"><path d="M1 4.500Q1 3 2.500 3H6L7.500 4.500H13.500Q15 4.500 15 6V12Q15 13.500 13.500 13.500H2.500Q1 13.500 1 12Z" fill="#f3cf5e" stroke="#b98a1e"/><path d="M1.500 7H14.500" stroke="#fae9a6"/></svg>
<div class="b" style="left:478px;top:934px;width:158px;height:24px;background:linear-gradient(#5f9af2 0,#3c7ee9 12%,#3576e4 50%,#2f6cd9 88%,#2a5fc4 100%);border:1px solid #2a5cc0;border-radius:3px;"></div>
<span class="t" style="left:506.00px;top:939.69px;font:11px/14px 'DejaVu Sans Condensed','DejaVu Sans',sans-serif;color:#fff;letter-spacing:0.025px;">2_Использование сп...</span>
<svg style="left:487px;top:937px" width="16" height="16"><path d="M3.500 1.500H10.500L13.500 4.500V14.500H3.500Z" fill="#fff" stroke="#7f8fa8"/><rect x="1" y="4" width="9" height="8" fill="#2b579a"/></svg>
<span class="t" style="left:488.72px;top:940.23px;font:bold 8px/10px 'Liberation Sans',sans-serif;color:#fff;">W</span>
<div class="b" style="left:638px;top:934px;width:158px;height:24px;background:linear-gradient(#5f9af2 0,#3c7ee9 12%,#3576e4 50%,#2f6cd9 88%,#2a5fc4 100%);border:1px solid #2a5cc0;border-radius:3px;"></div>
<span class="t" style="left:666.00px;top:939.69px;font:11px/14px 'DejaVu Sans Condensed','DejaVu Sans',sans-serif;color:#fff;letter-spacing:-0.074px;">Документ1 - Microso...</span>
<svg style="left:647px;top:937px" width="16" height="16"><path d="M3.500 1.500H10.500L13.500 4.500V14.500H3.500Z" fill="#fff" stroke="#7f8fa8"/><rect x="1" y="4" width="9" height="8" fill="#2b579a"/></svg>
<span class="t" style="left:648.72px;top:940.23px;font:bold 8px/10px 'Liberation Sans',sans-serif;color:#fff;">W</span>
<div class="b" style="left:798px;top:934px;width:158px;height:24px;background:linear-gradient(#1a4aa8 0,#1e52b8 30%,#2058c2 100%);border:1px solid #143a8e;border-radius:3px;box-shadow:inset 1px 1px 2px #0f2f78;"></div>
<span class="t" style="left:827.00px;top:939.69px;font:11px/14px 'DejaVu Sans Condensed','DejaVu Sans',sans-serif;color:#fff;letter-spacing:-0.012px;">Microsoft Excel - Зар...</span>
<svg style="left:807px;top:937px" width="16" height="16"><rect x="1.500" y="1.500" width="13" height="13" rx="1.500" fill="#f4f8f2" stroke="#4c8a3c"/><rect x="3" y="3" width="10" height="10" fill="#3c8f3a"/></svg>
<span class="t" style="left:811.66px;top:939.04px;font:bold 10px/13px 'Liberation Sans',sans-serif;color:#fff;">X</span>
<div class="b" style="left:1123px;top:937px;width:16px;height:17px;background:#3a6fd8;"></div>
<span class="t" style="left:1125.00px;top:939.69px;font:11px/14px 'DejaVu Sans Condensed','DejaVu Sans',sans-serif;color:#fff;letter-spacing:0.055px;">RL</span>
<div class="b" style="left:1152px;top:930px;width:128px;height:30px;background:linear-gradient(#1ba3f4 0,#1393ea 10%,#0f8ce6 50%,#0d80d6 88%,#0a69b4 100%);border-left:1px solid #0c62b4;box-shadow:inset 1px 0 0 #3cb4f8;"></div>
<svg style="left:1160px;top:936px" width="72" height="18"><rect x="2" y="8" width="11" height="7" fill="#d8dce4" stroke="#59606e"/><path d="M6 1L10 5H8V9H4V5H2Z" fill="#3ca43c" transform="translate(2,0)"/><circle cx="26" cy="8" r="5.500" fill="#9aa0a8" stroke="#50545c"/><circle cx="26" cy="8" r="2.200" fill="#e8e8ea"/><path d="M30 13Q34 12 35 9" stroke="#c8c8cc" fill="none"/><ellipse cx="45" cy="10" rx="4" ry="5" fill="#111"/><path d="M39 4L43 8M51 4L47 8M38 10H41M49 10H52M39 16L42 13M51 16L48 13" stroke="#111" stroke-width="1.300"/><circle cx="45" cy="11" r="1.500" fill="#7cc142"/><rect x="55" y="1" width="16" height="16" fill="#1a237e"/><circle cx="63" cy="9" r="2" fill="#ffd400"/><path d="M59.500 5Q57.500 9 59.500 13M66.500 5Q68.500 9 66.500 13" stroke="#ffd400" fill="none" stroke-width="1.300"/></svg>
<span class="t" style="left:1241.00px;top:939.69px;font:11px/14px 'DejaVu Sans Condensed','DejaVu Sans',sans-serif;color:#fff;letter-spacing:0.066px;">7:53</span>
<div class="b" style="left:564px;top:220px;width:303px;height:180px;background:#0054e3;border-radius:8px 8px 0 0;box-shadow:inset 0 0 0 1px #0a3fc4;"></div>
<div class="b" style="left:564px;top:220px;width:303px;height:29px;background:linear-gradient(#0058ee 0,#3a8bf5 6%,#0d62e8 14%,#0053e1 40%,#0050dd 70%,#0a5ff0 92%,#0042c8 100%);border-radius:8px 8px 0 0;box-shadow:inset 1px 1px 0 #2a6fe8;"></div>
<div class="b" style="left:567px;top:249px;width:297px;height:148px;background:#ece9d8;"></div>
<span class="t" style="left:570.60px;top:227.63px;font:bold 13.5px/18px 'DejaVu Sans Condensed','DejaVu Sans',sans-serif;color:#fff;letter-spacing:-0.689px;text-shadow:1px 1px 0 #0a2a8a;">Изменение размера таблицы</span>
<div class="b" style="left:818px;top:225px;width:21px;height:21px;background:linear-gradient(135deg,#6a9ff8 0,#2f6bea 45%,#1c4fd0 100%);border:1px solid #fff;border-radius:3px;"></div>
<span class="t" style="left:823.51px;top:222.92px;font:19px/25px 'Liberation Sans',sans-serif;color:#fff;">?</span>
<div class="b" style="left:841px;top:225px;width:21px;height:21px;background:linear-gradient(135deg,#f0a080 0,#e0522c 40%,#c6361a 100%);border:1px solid #fff;border-radius:3px;"></div>
<svg style="left:846px;top:230px" width="11" height="11"><path d="M1 1L10 10M10 1L1 10" stroke="#fff" stroke-width="2.200"/></svg>
<span class="t" style="left:572.40px;top:257.39px;font:11px/14px 'DejaVu Sans Condensed','DejaVu Sans',sans-serif;color:#000;letter-spacing:-0.146px;"><u>В</u>ыберите новый диапазон данных для таблицы:</span>
<div class="b" style="left:597px;top:272px;width:192px;height:20px;background:#fff;border:1px solid #7f9db9;"></div>
<span class="t" style="left:600.80px;top:277.49px;font:11px/14px 'DejaVu Sans Condensed','DejaVu Sans',sans-serif;color:#000;letter-spacing:-0.162px;">$A$2:$E$15</span>
<div class="b" style="left:768px;top:274px;width:20px;height:17px;background:linear-gradient(#fdfdfb,#e4e1d4);border:1px solid #7a8aa8;border-radius:2px;"></div>
<svg style="left:770px;top:276px" width="16" height="13"><rect x="1.500" y="1.500" width="13" height="10" fill="#fff" stroke="#4f6fae"/><path d="M1.500 5H14.500M1.500 8.500H14.500M6 1.500V11.500M10.500 1.500V11.500" stroke="#7f9fd0" stroke-width="0.800"/><rect x="2" y="2" width="12" height="2.500" fill="#5b84cc"/><path d="M5 3L11 7L8.500 7.500L10 10.500L8.800 11L7.300 8L5.500 9.500Z" fill="#d8281c"/></svg>
<span class="t" style="left:572.40px;top:296.19px;font:11px/14px 'DejaVu Sans Condensed','DejaVu Sans',sans-serif;color:#000;letter-spacing:-0.297px;">Примечание:</span>
<span class="t" style="left:649.80px;top:296.19px;font:11px/14px 'DejaVu Sans Condensed','DejaVu Sans',sans-serif;color:#000;letter-spacing:-0.148px;">Заголовки должны оставаться в той же</span>
<span class="t" style="left:649.80px;top:309.19px;font:11px/14px 'DejaVu Sans Condensed','DejaVu Sans',sans-serif;color:#000;letter-spacing:-0.103px;">строке, а результирующий диапазон</span>
<span class="t" style="left:649.80px;top:322.19px;font:11px/14px 'DejaVu Sans Condensed','DejaVu Sans',sans-serif;color:#000;letter-spacing:-0.107px;">таблицы - частично перекрываться с</span>
<span class="t" style="left:649.80px;top:335.19px;font:11px/14px 'DejaVu Sans Condensed','DejaVu Sans',sans-serif;color:#000;letter-spacing:-0.317px;">исходным диапазоном.</span>
<div class="b" style="left:699px;top:367px;width:75px;height:23px;background:linear-gradient(#fff 0,#f6f5ee 50%,#e6e3d5 90%,#d6d2c2 100%);border:1px solid #003c74;border-radius:3px;box-shadow:inset 0 0 0 2px #a9c4f0;"></div>
<span class="t" style="left:729.36px;top:372.19px;font:11px/14px 'DejaVu Sans Condensed','DejaVu Sans',sans-serif;color:#000;">OK</span>
<div class="b" style="left:783px;top:367px;width:75px;height:23px;background:linear-gradient(#fff 0,#f6f5ee 50%,#e6e3d5 90%,#d6d2c2 100%);border:1px solid #003c74;border-radius:3px;"></div>
<span class="t" style="left:800.60px;top:372.19px;font:11px/14px 'DejaVu Sans Condensed','DejaVu Sans',sans-serif;color:#000;letter-spacing:-0.343px;">Отмена</span>
</body></html>
